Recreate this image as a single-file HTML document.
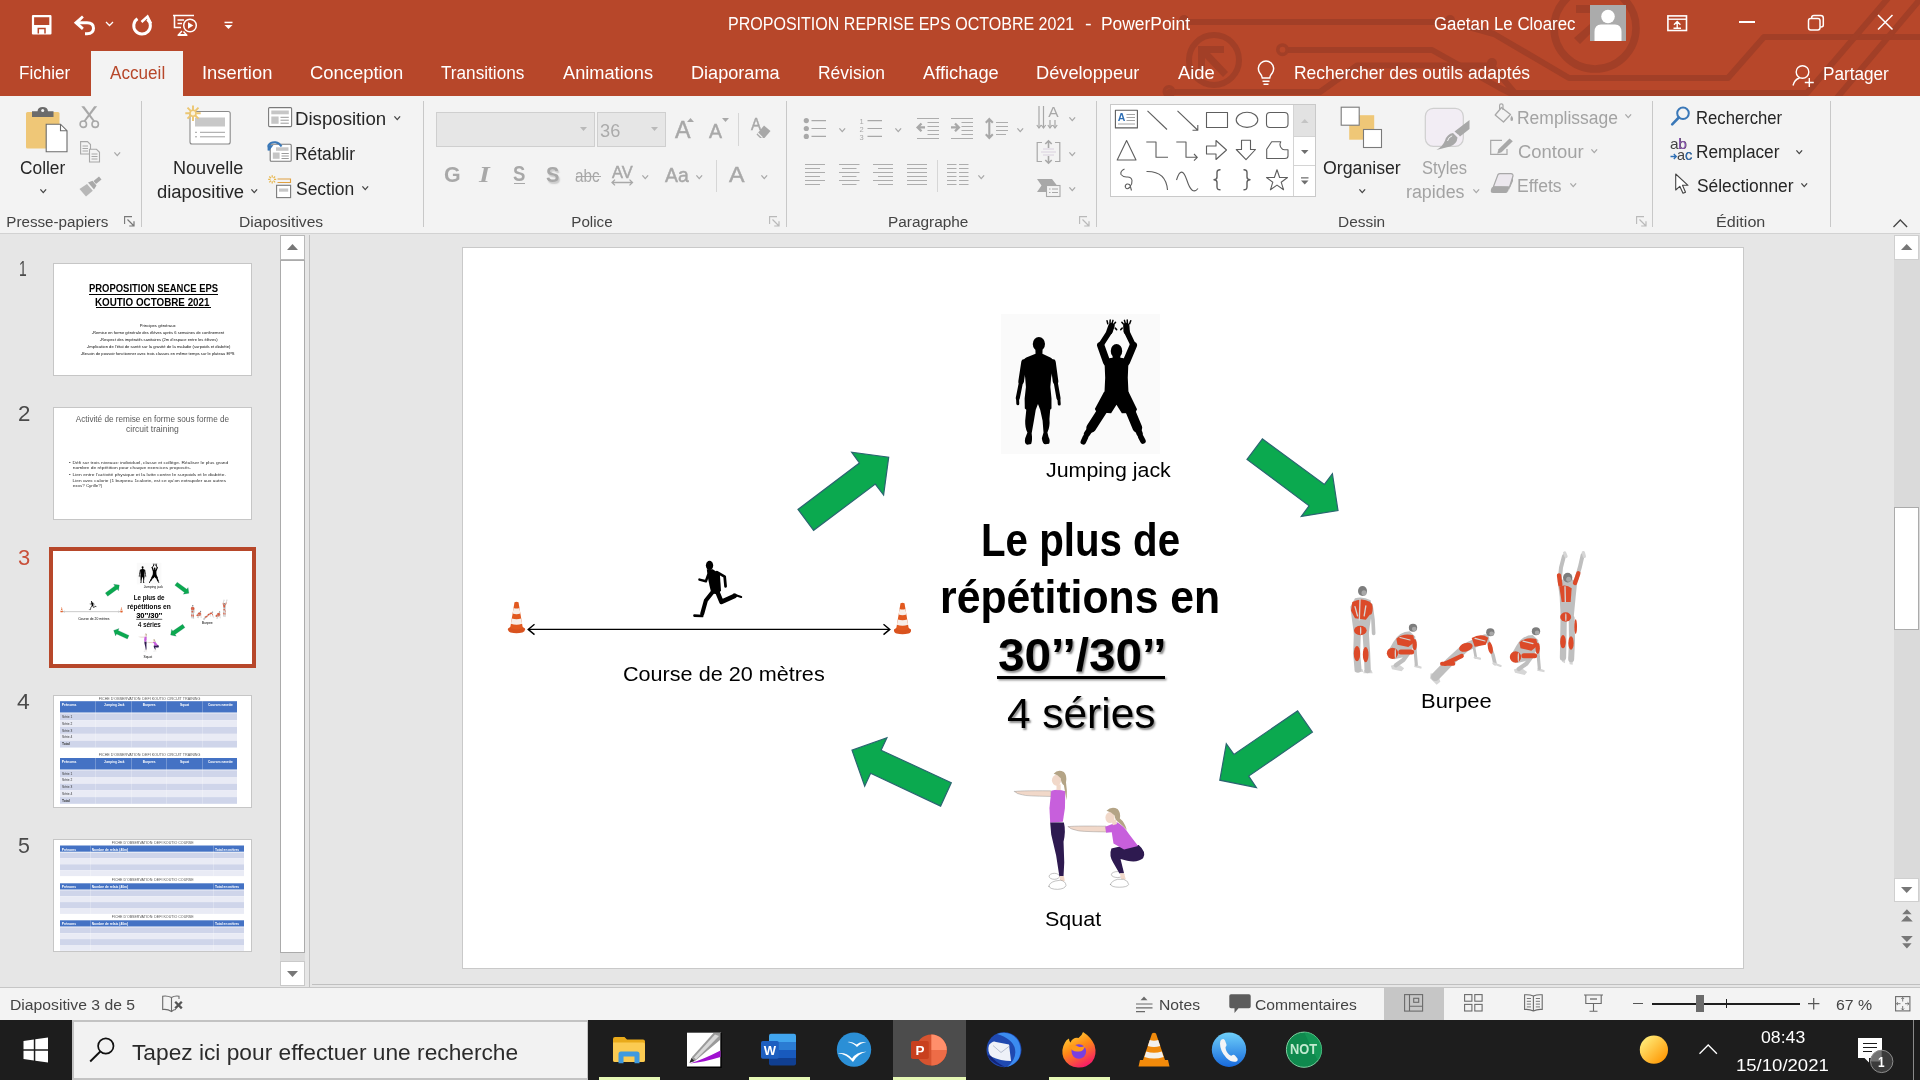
<!DOCTYPE html>
<html lang="fr"><head><meta charset="utf-8"><title>PowerPoint</title>
<style>
html,body{margin:0;padding:0;background:#e6e6e6;}
body{width:1920px;height:1080px;overflow:hidden;position:relative;font-family:"Liberation Sans", sans-serif;}
#r{position:absolute;left:0;top:0;width:1920px;height:1080px;overflow:hidden;will-change:transform;}
#r div,#r svg,#r span.t{position:absolute;}
#r div{box-sizing:border-box;}
span.t{white-space:pre;line-height:normal;transform-origin:0 0;display:block;}
svg{overflow:visible;}

</style></head><body><div id="r">
<div style="left:0px;top:0px;width:1920px;height:96px;background:#b7472a;"></div>
<div style="left:0px;top:96px;width:1920px;height:138px;background:#f3f3f3;"></div>
<div style="left:0px;top:233px;width:1920px;height:1px;background:#d2d2d2;"></div>
<div style="left:0px;top:234px;width:1920px;height:754px;background:#e6e6e6;"></div>
<div style="left:0px;top:987px;width:1920px;height:33px;background:#f3f3f3;border-top:1px solid #c6c6c6;"></div>
<div style="left:0px;top:1020px;width:1920px;height:60px;background:#1d1d1d;"></div>
<svg style="left:0px;top:0px;overflow:hidden;" width="1920" height="96" viewBox="0 0 1920 96">
<g fill="none" stroke="#a23f27" stroke-width="6" stroke-linejoin="round" stroke-linecap="round">
<path d="M1184 22 H1451 L1494 34 L1569 78 H1728 L1764 37 H1925"/>
<path d="M1289 50 H1432 L1500 88 L1510 93 H1807 L1889 -3"/>
<path d="M1836 99 L1922 -3"/>
<path d="M1169 92 H1320 L1357 65.5 H1488"/>
<path d="M1492 66 L1520 99"/>
</g>
<g fill="#a23f27">
<circle cx="1184" cy="20" r="5"/><circle cx="1450" cy="20" r="5"/>
<circle cx="1492" cy="63" r="5"/>
</g>
<g fill="none" stroke="#a23f27">
<circle cx="1282.5" cy="49.7" r="4.7" stroke-width="3.6"/>
<circle cx="1169" cy="91.5" r="4.7" stroke-width="3.6"/>
<circle cx="1214" cy="60" r="25" stroke-width="6"/>
<circle cx="1595" cy="28" r="41" stroke-width="7.5"/>
</g>
<g fill="#a23f27">
<path d="M1198 46 H1224 V53 H1210 L1228 72 L1223 77 L1205 58 V72 H1198 Z"/>
<path d="M1576 5 H1592 V13 H1576 Z M1574 38 L1590 24 L1595 29 L1580 44 Z"/>
</g>
</svg>
<div style="left:91px;top:51px;width:92px;height:46px;background:#f3f3f3;"></div>
<span class="t" style='left:728.16px;top:14.00px;font-size:18px;color:#ffffff;transform:scaleX(0.8907);'>PROPOSITION REPRISE EPS OCTOBRE 2021</span>
<span class="t" style='left:1074.31px;top:14.00px;font-size:18px;color:#ffffff;transform:scaleX(1.1111);'>  -  </span>
<span class="t" style='left:1101.05px;top:14.00px;font-size:18px;color:#ffffff;transform:scaleX(0.9669);'>PowerPoint</span>
<span class="t" style='left:1433.56px;top:14.00px;font-size:18px;color:#ffffff;transform:scaleX(0.9365);'>Gaetan Le Cloarec</span>
<span class="t" style='left:18.58px;top:63.00px;font-size:18px;color:#ffffff;transform:scaleX(0.9474);'>Fichier</span>
<span class="t" style='left:109.50px;top:63.00px;font-size:18px;color:#b7472a;transform:scaleX(0.9515);'>Accueil</span>
<span class="t" style='left:202.22px;top:63.00px;font-size:18px;color:#ffffff;transform:scaleX(1.0189);'>Insertion</span>
<span class="t" style='left:309.98px;top:63.00px;font-size:18px;color:#ffffff;transform:scaleX(1.0225);'>Conception</span>
<span class="t" style='left:440.76px;top:63.00px;font-size:18px;color:#ffffff;transform:scaleX(0.9538);'>Transitions</span>
<span class="t" style='left:563.00px;top:63.00px;font-size:18px;color:#ffffff;transform:scaleX(1.0113);'>Animations</span>
<span class="t" style='left:690.99px;top:63.00px;font-size:18px;color:#ffffff;transform:scaleX(1.0058);'>Diaporama</span>
<span class="t" style='left:818.05px;top:63.00px;font-size:18px;color:#ffffff;transform:scaleX(0.9699);'>Révision</span>
<span class="t" style='left:923.00px;top:63.00px;font-size:18px;color:#ffffff;transform:scaleX(1.0135);'>Affichage</span>
<span class="t" style='left:1035.98px;top:63.00px;font-size:18px;color:#ffffff;transform:scaleX(1.0125);'>Développeur</span>
<span class="t" style='left:1178.00px;top:63.00px;font-size:18px;color:#ffffff;transform:scaleX(1.0213);'>Aide</span>
<span class="t" style='left:1294.04px;top:63.00px;font-size:18px;color:#ffffff;transform:scaleX(0.9710);'>Rechercher des outils adaptés</span>
<span class="t" style='left:1822.57px;top:64.00px;font-size:18px;color:#ffffff;transform:scaleX(0.9517);'>Partager</span>
<svg style="left:1590px;top:5px;" width="36" height="36" viewBox="0 0 36 36"><rect width="36" height="36" fill="#ababab"/>
<circle cx="18" cy="11.5" r="6.8" fill="#fff"/>
<path d="M4.5 36 V27 Q4.5 19.5 11 19.5 H25 Q31.5 19.5 31.5 27 V36 Z" fill="#fff"/></svg>
<svg style="left:31px;top:14px;" width="22" height="22" viewBox="0 0 22 22"><path d="M2 2.200 H19.400 V19.500 H2 Z" fill="none" stroke="#fff" stroke-width="2.200" stroke-linejoin="round"/>
<rect x="2" y="11" width="17.400" height="8.500" fill="#fff"/>
<path d="M7.300 19.500 V14.500 H14 V19.500" fill="none" stroke="#b7472a" stroke-width="1.500"/></svg>
<svg style="left:73px;top:14px;" width="24" height="22" viewBox="0 0 24 22"><path d="M4 8.700 H14 Q20.500 8.700 20.500 14.200 Q20.500 19.500 14 19.700 H12" fill="none" stroke="#fff" stroke-width="3"/>
<path d="M0.800 8.700 L9 1.500 L10.800 3.600 L5.600 8.700 L10.800 13.800 L9 15.900 Z" fill="#fff"/></svg>
<svg style="left:105px;top:21px;" width="10" height="6" viewBox="0 0 10 6"><path d="M1 1 L4.5 4.5 L8 1" fill="none" stroke="#fff" stroke-width="1.3"/></svg>
<svg style="left:131px;top:14px;" width="22" height="22" viewBox="0 0 22 22"><path d="M6.500 4.800 A8.300 8.300 0 1 0 16.300 5.300" fill="none" stroke="#fff" stroke-width="3"/>
<path d="M10.500 8 L16.500 2.500 L20 9.500" fill="none" stroke="#fff" stroke-width="2.600"/></svg>
<svg style="left:172px;top:14px;" width="27" height="23" viewBox="0 0 27 23"><path d="M1 1.5 H22 M2.5 2 V13.5 H9" fill="none" stroke="#fff" stroke-width="1.6"/>
<path d="M5.5 6 H12 M5.5 9.5 H10" fill="none" stroke="#fff" stroke-width="1.4"/>
<circle cx="18" cy="11.5" r="6.3" fill="none" stroke="#fff" stroke-width="1.5"/>
<path d="M16 8.2 L21.3 11.5 L16 14.8 Z" fill="#fff"/>
<path d="M10 17 L6.5 20.8 H14.5 L11.5 17.5 M6 21.3 H15" fill="none" stroke="#fff" stroke-width="1.4"/></svg>
<svg style="left:224px;top:21px;" width="10" height="9" viewBox="0 0 10 9"><rect x="0.5" y="0.7" width="8" height="1.5" fill="#fff"/><path d="M0.5 4 H8.5 L4.5 8 Z" fill="#fff"/></svg>
<svg style="left:1667px;top:15px;" width="21" height="17" viewBox="0 0 21 17"><rect x="0.9" y="0.9" width="18.6" height="14.6" fill="none" stroke="#fff" stroke-width="1.6"/>
<path d="M1 4.2 H19.5" stroke="#fff" stroke-width="1.4"/>
<path d="M10.2 13.5 V7 M7 9.8 L10.2 6.6 L13.4 9.8 M6.5 13.2 H14" fill="none" stroke="#fff" stroke-width="1.4"/></svg>
<div style="left:1739px;top:21px;width:16px;height:1.6px;background:#ffffff;"></div>
<svg style="left:1807px;top:14px;" width="18" height="18" viewBox="0 0 18 18"><rect x="1.5" y="4.5" width="11.5" height="11.5" rx="2.2" fill="none" stroke="#fff" stroke-width="1.5"/>
<path d="M4.7 4.2 V3.6 Q4.7 1.5 7 1.5 H13.7 Q16.3 1.5 16.3 4 V11 Q16.3 13 14 13 H13.3" fill="none" stroke="#fff" stroke-width="1.5"/></svg>
<svg style="left:1877px;top:14px;" width="17" height="17" viewBox="0 0 17 17"><path d="M1 1 L15.5 15.5 M15.5 1 L1 15.5" stroke="#fff" stroke-width="1.5" fill="none"/></svg>
<svg style="left:1256px;top:61px;" width="20" height="26" viewBox="0 0 20 26"><path d="M6.3 17 Q6 14.5 3.8 12 A7.6 7.6 0 1 1 16.2 12 Q14 14.5 13.7 17 Z" fill="none" stroke="#fff" stroke-width="1.5"/>
<path d="M6.5 20.2 H13.5 M7.5 23.3 H12.5" stroke="#fff" stroke-width="1.5"/></svg>
<svg style="left:1792px;top:64px;" width="24" height="24" viewBox="0 0 24 24"><circle cx="10.5" cy="8" r="6.3" fill="none" stroke="#fff" stroke-width="1.4"/>
<path d="M1 21.5 Q2.5 15.5 7.5 14" fill="none" stroke="#fff" stroke-width="1.4"/>
<path d="M17.3 14 V23 M12.8 18.5 H21.8" stroke="#fff" stroke-width="1.4"/></svg>
<div style="left:141px;top:101px;width:1px;height:126px;background:#c8c8c8;"></div>
<div style="left:423px;top:101px;width:1px;height:126px;background:#c8c8c8;"></div>
<div style="left:786px;top:101px;width:1px;height:126px;background:#c8c8c8;"></div>
<div style="left:1096px;top:101px;width:1px;height:126px;background:#c8c8c8;"></div>
<div style="left:1652px;top:101px;width:1px;height:126px;background:#c8c8c8;"></div>
<div style="left:1830px;top:101px;width:1px;height:126px;background:#c8c8c8;"></div>
<svg style="left:26px;top:106px;" width="42" height="47" viewBox="0 0 42 47">
<rect x="0" y="6" width="33.5" height="36.5" rx="1.5" fill="#efc777"/>
<path d="M6 5.2 H11.5 Q12 1 16.7 1 Q21.5 1 22 5.2 H27.5 V11 H6 Z" fill="#6b6b6b"/>
<circle cx="16.7" cy="4.6" r="1.5" fill="#f3f3f3"/>
<path d="M20.2 18.2 H34.5 L41 24.7 V45.8 H20.2 Z" fill="#fff" stroke="#6b6b6b" stroke-width="1.1"/>
<path d="M34.5 18.2 V24.7 H41" fill="none" stroke="#6b6b6b" stroke-width="1.1"/></svg>
<span class="t" style='left:19.54px;top:158.00px;font-size:18px;color:#262626;transform:scaleX(0.9617);'>Coller</span>
<svg style="left:40px;top:189px;" width="6.5" height="4.6" viewBox="0 0 6.5 4.6"><path d="M0.4 0.4 L3.25 3.6 L6.1 0.4" fill="none" stroke="#444" stroke-width="1.3"/></svg>
<svg style="left:79px;top:106px;" width="21" height="23" viewBox="0 0 21 23"><g fill="#a8a8a8"><path d="M2.300 0.300 L5.300 0.300 L16 15 L14.500 16 Z"/><path d="M18.200 0.300 L15.200 0.300 L4.500 15 L6 16 Z"/></g>
<g fill="none" stroke="#a8a8a8" stroke-width="1.600"><circle cx="4.300" cy="18.200" r="3.200"/><circle cx="16.200" cy="18.200" r="3.200"/></g></svg>
<svg style="left:80px;top:141px;" width="21" height="22" viewBox="0 0 21 22"><g fill="#f3f3f3" stroke="#a8a8a8" stroke-width="1.1">
<path d="M0.6 0.6 H7.5 L10.5 3.6 V13 H0.6 Z"/><path d="M9.5 8.3 H16.5 L19.5 11.3 V21 H9.5 Z"/></g>
<g stroke="#a8a8a8" stroke-width="1"><path d="M2.5 5 H8 M2.5 7.5 H8 M2.5 10 H8 M11.5 13 H17.5 M11.5 15.5 H17.5 M11.5 18 H17.5"/></g></svg>
<svg style="left:114px;top:152px;" width="6.5" height="4.6" viewBox="0 0 6.5 4.6"><path d="M0.4 0.4 L3.25 3.6 L6.1 0.4" fill="none" stroke="#a8a8a8" stroke-width="1.3"/></svg>
<svg style="left:79px;top:176px;" width="23" height="21" viewBox="0 0 23 21"><g fill="#a8a8a8"><path d="M14.5 5 L20 0.5 L22.5 3.5 L17 8 Z"/>
<path d="M9 6.5 L13.5 4.8 L17.5 9.5 L15 13.5 Z"/><path d="M8 8 L13.8 14.8 L7 20.5 L0.5 13 Z" opacity="0.8"/></g></svg>
<span class="t" style='left:6.25px;top:213.00px;font-size:15.2px;color:#444444;'>Presse-papiers</span>
<svg style="left:124px;top:216px;" width="12" height="11" viewBox="0 0 12 11"><path d="M0.6 8 V0.6 H8" fill="none" stroke="#777" stroke-width="1.1"/><path d="M3.5 3.5 L10 10 M10 5.2 V10 H5.2" fill="none" stroke="#777" stroke-width="1.2"/></svg>
<svg style="left:185px;top:105px;" width="46" height="41" viewBox="0 0 46 41">
<rect x="5" y="6.5" width="40.2" height="32.5" rx="2" fill="#fff" stroke="#8a8a8a" stroke-width="1.1"/>
<rect x="10" y="12.5" width="30" height="9" fill="#c8c8c8"/>
<path d="M10 27.3 H12 M15 27.3 H40 M10 31.8 H12 M15 31.8 H40" stroke="#a0a0a0" stroke-width="1"/>
<g stroke="#ecc671" stroke-width="1.9" fill="none"><path d="M8 0.5 V5 M8 11.5 V16 M0.3 8.2 H4.8 M11.2 8.2 H15.7 M2.5 2.7 L5.7 5.9 M10.3 10.5 L13.5 13.7 M13.5 2.7 L10.3 5.9 M5.7 10.5 L2.5 13.7"/></g>
<circle cx="8" cy="8.2" r="3" fill="#fbf3dc" stroke="#ecc671" stroke-width="1.6"/></svg>
<span class="t" style='left:173.49px;top:158.00px;font-size:18px;color:#262626;transform:scaleX(1.0037);'>Nouvelle</span>
<span class="t" style='left:156.73px;top:182.00px;font-size:18px;color:#262626;transform:scaleX(1.0240);'>diapositive</span>
<svg style="left:251px;top:189px;" width="6.5" height="4.6" viewBox="0 0 6.5 4.6"><path d="M0.4 0.4 L3.25 3.6 L6.1 0.4" fill="none" stroke="#444" stroke-width="1.3"/></svg>
<svg style="left:268px;top:107px;" width="25" height="21" viewBox="0 0 25 21"><rect x="0.6" y="0.6" width="23" height="19" rx="1" fill="#fff" stroke="#7a7a7a" stroke-width="1.1"/>
<rect x="3.3" y="3.5" width="17.5" height="3.8" fill="#c6c6c6"/><rect x="3.3" y="9.5" width="7.3" height="7.3" fill="#c6c6c6"/>
<path d="M12.5 10.3 H20.8 M12.5 13.2 H20.8 M12.5 16.2 H20.8" stroke="#9a9a9a" stroke-width="1"/></svg>
<span class="t" style='left:295.20px;top:109.00px;font-size:18px;color:#262626;transform:scaleX(1.0351);'>Disposition</span>
<svg style="left:394px;top:115.8px;" width="6.5" height="4.6" viewBox="0 0 6.5 4.6"><path d="M0.4 0.4 L3.25 3.6 L6.1 0.4" fill="none" stroke="#444" stroke-width="1.3"/></svg>
<svg style="left:267px;top:141px;" width="26" height="22" viewBox="0 0 26 22"><rect x="3.2" y="3.3" width="21" height="17" rx="1" fill="#fff" stroke="#7a7a7a" stroke-width="1.1"/>
<rect x="9" y="6.3" width="12.5" height="3.5" fill="#c6c6c6"/><rect x="5.8" y="11.5" width="6.8" height="6.3" fill="#c6c6c6"/>
<path d="M14.5 12.5 H21.8 M14.5 15 H21.8 M14.5 17.5 H21.8" stroke="#9a9a9a" stroke-width="1"/>
<path d="M1.6 9.5 V4 Q4 0.8 8.5 1.3 Q12.5 2 14.5 5.5" fill="none" stroke="#3a78b8" stroke-width="2"/>
<path d="M0.3 4.5 L6.5 4 L2 10 Z" fill="#3a78b8"/></svg>
<span class="t" style='left:295.30px;top:144.00px;font-size:18px;color:#262626;transform:scaleX(0.9668);'>Rétablir</span>
<svg style="left:268px;top:175px;" width="24" height="24" viewBox="0 0 24 24">
<g stroke="#e8b64a" stroke-width="1.2" fill="none"><path d="M4.2 0.3 V2.6 M4.2 6.2 V8.5 M0.2 4.4 H2.4 M6 4.4 H8.2 M1.3 1.5 L2.9 3.1 M5.5 5.7 L7.1 7.3 M7.1 1.5 L5.5 3.1 M2.9 5.7 L1.3 7.3"/></g>
<path d="M9.5 4 H22.5 V7.5 H9.5" fill="none" stroke="#e0a040" stroke-width="1.1"/>
<rect x="8.6" y="10.3" width="14" height="12.3" fill="#fff" stroke="#7a7a7a" stroke-width="1.1"/>
<rect x="11" y="13.5" width="9.2" height="3.2" fill="#c6c6c6"/></svg>
<span class="t" style='left:296.02px;top:179.00px;font-size:18px;color:#262626;transform:scaleX(0.9700);'>Section</span>
<svg style="left:362px;top:186px;" width="6.5" height="4.6" viewBox="0 0 6.5 4.6"><path d="M0.4 0.4 L3.25 3.6 L6.1 0.4" fill="none" stroke="#444" stroke-width="1.3"/></svg>
<span class="t" style='left:239.21px;top:213.00px;font-size:15.2px;color:#444444;transform:scaleX(1.0280);'>Diapositives</span>
<div style="left:436px;top:112px;width:159px;height:35px;background:#e6e6e6;border:1px solid #cfcfcf;"></div>
<div style="left:597px;top:112px;width:69px;height:35px;background:#e6e6e6;border:1px solid #cfcfcf;"></div>
<svg style="left:580px;top:127px;" width="8" height="5" viewBox="0 0 8 5"><path d="M0 0 H7 L3.5 4 Z" fill="#b9b9b9"/></svg>
<svg style="left:651px;top:127px;" width="8" height="5" viewBox="0 0 8 5"><path d="M0 0 H7 L3.5 4 Z" fill="#b9b9b9"/></svg>
<span class="t" style='left:599.99px;top:121.00px;font-size:18px;color:#ababab;transform:scaleX(1.0135);'>36</span>
<span class="t" style='left:674.50px;top:116.00px;font-size:24px;color:#a8a8a8;transform:scaleX(0.9688);-webkit-text-stroke:0.45px #a8a8a8;'>A</span>
<svg style="left:687px;top:118px;" width="8" height="5" viewBox="0 0 8 5"><path d="M0 4 H7 L3.5 0 Z" fill="#a8a8a8"/></svg>
<span class="t" style='left:709.00px;top:120.00px;font-size:19.5px;color:#a8a8a8;-webkit-text-stroke:0.45px #a8a8a8;'>A</span>
<svg style="left:721.5px;top:118px;" width="8" height="5" viewBox="0 0 8 5"><path d="M0 0 H7 L3.5 4 Z" fill="#a8a8a8"/></svg>
<div style="left:738px;top:113px;width:1px;height:33px;background:#d6d6d6;"></div>
<span class="t" style='left:751.00px;top:115.00px;font-size:17px;color:#a8a8a8;transform:scaleX(0.8889);-webkit-text-stroke:0.45px #a8a8a8;'>A</span>
<svg style="left:754px;top:124px;" width="18" height="16" viewBox="0 0 18 16"><path d="M10 1.5 L16.5 7 L10.5 14 H6 L2.5 10.5 Z" fill="#a8a8a8"/><path d="M3.8 9 L8.5 13.7" stroke="#f3f3f3" stroke-width="1.2"/></svg>
<span class="t" style='left:443.55px;top:162.00px;font-size:22.5px;color:#a8a8a8;font-weight:700;transform:scaleX(0.9508);'>G</span>
<span class="t" style='left:479.31px;top:162.00px;font-size:22.5px;color:#a8a8a8;font-weight:700;font-style:italic;font-family:"Liberation Serif", serif;transform:scaleX(1.2308);'>I</span>
<span class="t" style='left:513.35px;top:162.00px;font-size:21.5px;color:#a8a8a8;font-weight:700;transform:scaleX(0.8627);'>S</span>
<div style="left:514px;top:182.5px;width:11px;height:1.3px;background:#a8a8a8;"></div>
<span class="t" style='left:546.33px;top:162.00px;font-size:22.5px;color:#a8a8a8;font-weight:700;transform:scaleX(0.8889);text-shadow:1.5px 1.5px 1.5px #c9c9c9;'>S</span>
<span class="t" style='left:575.38px;top:165.00px;font-size:18.5px;color:#a8a8a8;transform:scaleX(0.8246);'>abc</span>
<div style="left:575.5px;top:176.3px;width:25px;height:1.2px;background:#a8a8a8;"></div>
<span class="t" style='left:611.50px;top:164.00px;font-size:16px;color:#a8a8a8;transform:scaleX(1.0250);-webkit-text-stroke:0.45px #a8a8a8;'>AV</span>
<svg style="left:611px;top:179px;" width="23" height="7" viewBox="0 0 23 7"><path d="M1 3.5 H21.5 M4 0.6 L1 3.5 L4 6.4 M18.5 0.6 L21.5 3.5 L18.5 6.4" fill="none" stroke="#a8a8a8" stroke-width="1.3"/></svg>
<svg style="left:642px;top:174.5px;" width="6.5" height="4.6" viewBox="0 0 6.5 4.6"><path d="M0.4 0.4 L3.25 3.6 L6.1 0.4" fill="none" stroke="#a8a8a8" stroke-width="1.3"/></svg>
<span class="t" style='left:665.00px;top:164.00px;font-size:20px;color:#a8a8a8;transform:scaleX(0.9694);-webkit-text-stroke:0.45px #a8a8a8;'>Aa</span>
<svg style="left:695.5px;top:174.5px;" width="6.5" height="4.6" viewBox="0 0 6.5 4.6"><path d="M0.4 0.4 L3.25 3.6 L6.1 0.4" fill="none" stroke="#a8a8a8" stroke-width="1.3"/></svg>
<div style="left:716px;top:160px;width:1px;height:32px;background:#d6d6d6;"></div>
<span class="t" style='left:728.75px;top:162.00px;font-size:22.5px;color:#a8a8a8;transform:scaleX(1.0333);-webkit-text-stroke:0.45px #a8a8a8;'>A</span>
<svg style="left:761px;top:174.5px;" width="6.5" height="4.6" viewBox="0 0 6.5 4.6"><path d="M0.4 0.4 L3.25 3.6 L6.1 0.4" fill="none" stroke="#a8a8a8" stroke-width="1.3"/></svg>
<span class="t" style='left:571.25px;top:213.00px;font-size:15.2px;color:#444444;'>Police</span>
<svg style="left:769px;top:216px;" width="12" height="11" viewBox="0 0 12 11"><path d="M0.6 8 V0.6 H8" fill="none" stroke="#b9b9b9" stroke-width="1.1"/><path d="M3.5 3.5 L10 10 M10 5.2 V10 H5.2" fill="none" stroke="#b9b9b9" stroke-width="1.2"/></svg>
<svg style="left:803px;top:117px;" width="24" height="23" viewBox="0 0 24 23"><g fill="#a8a8a8"><circle cx="3.3" cy="3.6" r="2.6"/><circle cx="3.3" cy="11.5" r="2.6"/><circle cx="3.3" cy="19.4" r="2.6"/></g>
<path d="M8.5 3.6 H23 M8.5 11.5 H23 M8.5 19.4 H23" stroke="#a8a8a8" stroke-width="1.2"/></svg>
<svg style="left:839px;top:128px;" width="6.5" height="4.6" viewBox="0 0 6.5 4.6"><path d="M0.4 0.4 L3.25 3.6 L6.1 0.4" fill="none" stroke="#a8a8a8" stroke-width="1.3"/></svg>
<svg style="left:859px;top:117px;" width="24" height="23" viewBox="0 0 24 23"><path d="M8.5 3.6 H23 M8.5 11.5 H23 M8.5 19.4 H23" stroke="#a8a8a8" stroke-width="1.2"/>
<text x="0.5" y="6.5" font-size="7.5" fill="#a8a8a8" font-family="Liberation Sans, sans-serif">1</text>
<text x="0.5" y="14.5" font-size="7.5" fill="#a8a8a8" font-family="Liberation Sans, sans-serif">2</text>
<text x="0.5" y="22.5" font-size="7.5" fill="#a8a8a8" font-family="Liberation Sans, sans-serif">3</text></svg>
<svg style="left:894.5px;top:128px;" width="6.5" height="4.6" viewBox="0 0 6.5 4.6"><path d="M0.4 0.4 L3.25 3.6 L6.1 0.4" fill="none" stroke="#a8a8a8" stroke-width="1.3"/></svg>
<svg style="left:916px;top:117px;" width="24" height="23" viewBox="0 0 24 23"><path d="M1 1.5 H23 M11.5 5.500 H23 M11.5 9.500 H23 M11.5 13.500 H23 M11.500 17.500 H23 M1 21.500 H23" stroke="#adadad" stroke-width="1"/>
<path d="M9 10.4 H2.5 M5.5 6.5 L1.6 10.4 L5.5 14.300" fill="none" stroke="#a8a8a8" stroke-width="2.300"/></svg>
<svg style="left:950px;top:117px;" width="24" height="23" viewBox="0 0 24 23"><path d="M1 1.5 H23 M11.5 5.500 H23 M11.5 9.500 H23 M11.5 13.500 H23 M11.500 17.500 H23 M1 21.500 H23" stroke="#adadad" stroke-width="1"/>
<path d="M1 10.4 H8 M5 6.5 L8.9 10.4 L5 14.300" fill="none" stroke="#a8a8a8" stroke-width="2.300"/></svg>
<svg style="left:985px;top:117px;" width="24" height="23" viewBox="0 0 24 23"><path d="M11 5.500 H23 M11 9.500 H23 M11 13.500 H23 M11 17.500 H21" stroke="#adadad" stroke-width="1"/>
<path d="M4.3 2 V21 M0.800 5.700 L4.3 2 L7.800 5.700 M0.800 17.300 L4.3 21 L7.800 17.300" fill="none" stroke="#a8a8a8" stroke-width="2.100"/></svg>
<svg style="left:1017px;top:128px;" width="6.5" height="4.6" viewBox="0 0 6.5 4.6"><path d="M0.4 0.4 L3.25 3.6 L6.1 0.4" fill="none" stroke="#a8a8a8" stroke-width="1.3"/></svg>
<svg style="left:1036px;top:105px;" width="26" height="25" viewBox="0 0 26 25"><path d="M3 1 V23 M7.5 1 V23 M14 15 V23 M19 15 V23" stroke="#a8a8a8" stroke-width="1.2" fill="none"/>
<path d="M0.8 20 L3 23 L5.2 20 M5.3 20 L7.5 23 L9.7 20 M11.8 20 L14 23 L16.2 20 M16.8 20 L19 23 L21.2 20" stroke="#a8a8a8" stroke-width="1.2" fill="none"/>
<text x="12.3" y="12.2" font-size="15.5" fill="#a8a8a8" font-family="Liberation Sans, sans-serif">A</text></svg>
<svg style="left:1069px;top:116.5px;" width="6.5" height="4.6" viewBox="0 0 6.5 4.6"><path d="M0.4 0.4 L3.25 3.6 L6.1 0.4" fill="none" stroke="#a8a8a8" stroke-width="1.3"/></svg>
<svg style="left:1036px;top:140px;" width="26" height="25" viewBox="0 0 26 25"><path d="M6 2.5 H1.2 V21.5 H6 M19 2.5 H23.8 V21.5 H19" fill="none" stroke="#a8a8a8" stroke-width="1.2"/>
<path d="M7 9 H18 M5 12 H20 M7 15 H18" stroke="#d9d0de" stroke-width="1"/>
<path d="M12.5 8 V1 M9.3 4 L12.5 0.8 L15.7 4 M12.5 16 V23 M9.3 20 L12.5 23.2 L15.7 20" fill="none" stroke="#a8a8a8" stroke-width="1.6"/></svg>
<svg style="left:1069px;top:152px;" width="6.5" height="4.6" viewBox="0 0 6.5 4.6"><path d="M0.4 0.4 L3.25 3.6 L6.1 0.4" fill="none" stroke="#a8a8a8" stroke-width="1.3"/></svg>
<svg style="left:1036px;top:178px;" width="26" height="20" viewBox="0 0 26 20"><path d="M1 1 H16 L21 7.5 L16 14 H1 L5.5 7.5 Z" fill="#a8a8a8"/>
<rect x="10.5" y="7.5" width="13.5" height="11" fill="#f3f3f3" stroke="#a8a8a8" stroke-width="1.1"/>
<path d="M13 11 H14.5 M16 11 H22 M13 14.5 H14.5 M16 14.5 H22" stroke="#a8a8a8" stroke-width="1"/></svg>
<svg style="left:1069px;top:186.5px;" width="6.5" height="4.6" viewBox="0 0 6.5 4.6"><path d="M0.4 0.4 L3.25 3.6 L6.1 0.4" fill="none" stroke="#a8a8a8" stroke-width="1.3"/></svg>
<svg style="left:805px;top:164px;" width="21" height="22" viewBox="0 0 21 22"><path d="M0 0.5 H20 M0 4.5 H15 M0 8.5 H20 M0 12.5 H15 M0 16.5 H20 M0 20.5 H15" stroke="#adadad" stroke-width="1.0" fill="none"/></svg>
<svg style="left:839px;top:164px;" width="21" height="22" viewBox="0 0 21 22"><path d="M0 0.5 H20.5 M3 4.5 H17.5 M0 8.5 H20.5 M3 12.5 H17.5 M0 16.5 H20.5 M3 20.5 H17.5" stroke="#adadad" stroke-width="1.0" fill="none"/></svg>
<svg style="left:873px;top:164px;" width="21" height="22" viewBox="0 0 21 22"><path d="M0 0.5 H20 M5 4.5 H20 M0 8.5 H20 M5 12.5 H20 M0 16.5 H20 M5 20.5 H20" stroke="#adadad" stroke-width="1.0" fill="none"/></svg>
<svg style="left:907px;top:164px;" width="21" height="22" viewBox="0 0 21 22"><path d="M0 0.5 H20 M0 4.5 H20 M0 8.5 H20 M0 12.5 H20 M0 16.5 H20 M0 20.5 H20" stroke="#adadad" stroke-width="1.0" fill="none"/></svg>
<div style="left:937px;top:160px;width:1px;height:32px;background:#d6d6d6;"></div>
<svg style="left:946.5px;top:164px;" width="22" height="22" viewBox="0 0 22 22"><path d="M0 0.5 H9.5 M0 4.5 H9.5 M0 8.5 H9.5 M0 12.5 H9.5 M0 16.5 H9.5 M0 20.5 H9.5 M12 0.5 H21.5 M12 4.5 H21.5 M12 8.5 H21.5 M12 12.5 H21.5 M12 16.5 H21.5 M12 20.5 H21.5" stroke="#adadad" stroke-width="1.0" fill="none"/></svg>
<svg style="left:977.5px;top:174.5px;" width="6.5" height="4.6" viewBox="0 0 6.5 4.6"><path d="M0.4 0.4 L3.25 3.6 L6.1 0.4" fill="none" stroke="#a8a8a8" stroke-width="1.3"/></svg>
<span class="t" style='left:888.23px;top:213.00px;font-size:15.2px;color:#444444;transform:scaleX(1.0129);'>Paragraphe</span>
<svg style="left:1079px;top:216px;" width="12" height="11" viewBox="0 0 12 11"><path d="M0.6 8 V0.6 H8" fill="none" stroke="#b9b9b9" stroke-width="1.1"/><path d="M3.5 3.5 L10 10 M10 5.2 V10 H5.2" fill="none" stroke="#b9b9b9" stroke-width="1.2"/></svg>
<div style="left:1110px;top:104px;width:206px;height:93px;background:#ffffff;border:1px solid #c9c9c9;"></div>
<div style="left:1294px;top:105px;width:21px;height:32px;background:#e2e2e2;"></div>
<div style="left:1293px;top:105px;width:1px;height:91px;background:#d4d4d4;"></div>
<div style="left:1294px;top:136px;width:21px;height:1px;background:#d4d4d4;"></div>
<div style="left:1294px;top:165px;width:21px;height:1px;background:#d4d4d4;"></div>
<svg style="left:1301px;top:119px;" width="8" height="5" viewBox="0 0 8 5"><path d="M0 4 H7.5 L3.75 0 Z" fill="#c4c4c4"/></svg>
<svg style="left:1301px;top:149.5px;" width="8" height="5" viewBox="0 0 8 5"><path d="M0 0 H7.5 L3.75 4 Z" fill="#6e6e6e"/></svg>
<svg style="left:1301px;top:177px;" width="8" height="9" viewBox="0 0 8 9"><path d="M0 0.2 H7.5 V1.6 H0 Z M0 3.6 H7.5 L3.75 7.6 Z" fill="#6e6e6e"/></svg>
<svg style="left:1110px;top:104px;" width="184" height="93" viewBox="0 0 184 93">
<g fill="none" stroke="#5e5e5e" stroke-width="1.1" stroke-linejoin="round">
<rect x="5.4" y="6.3" width="22" height="17.6" fill="#fff"/>
<path d="M16.5 10.5 H25 M16.5 13.5 H25 M16.5 16.5 H25 M8 20 H25" stroke="#9a9a9a" stroke-width="0.9"/>
<path d="M37.5 6.8 L57 25.5"/>
<path d="M67.5 6.8 L87.5 26 M87.8 21 V26.3 H82.5"/>
<rect x="96.5" y="8.5" width="21" height="15"/>
<ellipse cx="137" cy="15.8" rx="10.8" ry="7.6"/>
<rect x="156.5" y="8.5" width="21.5" height="15" rx="3.5"/>
<path d="M16.6 36.5 L26 56 H7.2 Z"/>
<path d="M36.3 38 H46 V53.3 H58"/>
<path d="M66.3 38 H76 V53.3 H87 M84 50 L87.3 53.3 L84 56.6"/>
<path d="M96.5 42 H106 V36.5 L116.5 46 L106 55.5 V50 H96.5 Z"/>
<path d="M131.5 36.3 H140.5 V45.5 H145.5 L136 55.7 L126.3 45.5 H131.5 Z"/>
<path d="M156.700 54.500 V45.300 L161.700 37.800 H170.800 Q168.500 42 172.500 45.200 Q175 46 178 45.700 V52 Q178 54.500 175 54.500 Z"/>
<path d="M14.5 65 Q10 67 11 70.5 Q13.5 73.5 17.5 73 Q21.5 73 22 76.500 Q22.5 80 19.5 83.500 Q17 86 15.500 83.5 Q14.5 81 17 80 Q20 79.500 20.5 83 L21.5 86.500"/>
<path d="M36.5 67.5 Q56 67 57.5 86"/>
<path d="M66.5 76 Q71.500 60 77 76.500 Q82 92 88 84.500"/>
<path d="M110.500 65.800 Q107 65.500 107 68.500 V73 Q107 75.500 104 75.800 Q107 76 107 78.500 V83 Q107 86 110.500 85.800" stroke-width="1.4"/>
<path d="M133.500 65.800 Q137 65.500 137 68.500 V73 Q137 75.500 140 75.800 Q137 76 137 78.500 V83 Q137 86 133.500 85.800" stroke-width="1.4"/>
<path d="M167 65.800 L169.600 73.500 H177.500 L171.200 78.200 L173.600 85.800 L167 81.100 L160.400 85.800 L162.800 78.200 L156.500 73.500 H164.400 Z"/>
</g>
<text x="7.700" y="17.300" font-size="10.500" font-weight="700" fill="#2f6fb5" font-family="Liberation Sans, sans-serif">A</text>
</svg>
<svg style="left:1340px;top:106px;" width="43" height="43" viewBox="0 0 43 43"><rect x="9.200" y="9.200" width="25" height="24.500" fill="#efc777"/>
<rect x="1.200" y="1.200" width="18" height="18" fill="#fff" stroke="#7a7a7a" stroke-width="1.100"/>
<rect x="23.500" y="23.500" width="18" height="18" fill="#fff" stroke="#7a7a7a" stroke-width="1.100"/></svg>
<span class="t" style='left:1322.51px;top:158.00px;font-size:18px;color:#262626;transform:scaleX(0.9840);'>Organiser</span>
<svg style="left:1358.75px;top:189px;" width="6.5" height="4.6" viewBox="0 0 6.5 4.6"><path d="M0.4 0.4 L3.25 3.6 L6.1 0.4" fill="none" stroke="#444" stroke-width="1.3"/></svg>
<svg style="left:1424px;top:107px;" width="47" height="46" viewBox="0 0 47 46"><rect x="1.300" y="1.300" width="38" height="38" rx="8" fill="#f2edf4" stroke="#cfcfcf" stroke-width="1.200"/>
<path d="M45.500 13 L34 27.500 L30.500 24.500 L45.500 13 Z M45.500 13 V22 L36 29.500 L33 26" fill="#a8a8a8"/>
<path d="M29 26 L33.500 30.500 Q33 37 26 39.500 Q19 41 12.500 43 Q19 39 21 33.500 Q23 27 29 26 Z" fill="#a8a8a8"/>
<path d="M28.200 28.800 Q24.500 30 23.500 34" stroke="#f3f3f3" stroke-width="1" fill="none"/></svg>
<span class="t" style='left:1421.81px;top:158.00px;font-size:18px;color:#a3a3a3;transform:scaleX(0.9162);'>Styles</span>
<span class="t" style='left:1406.26px;top:182.00px;font-size:18px;color:#a3a3a3;transform:scaleX(0.9913);'>rapides</span>
<svg style="left:1472.5px;top:189px;" width="6.5" height="4.6" viewBox="0 0 6.5 4.6"><path d="M0.4 0.4 L3.25 3.6 L6.1 0.4" fill="none" stroke="#a8a8a8" stroke-width="1.3"/></svg>
<svg style="left:1494px;top:103px;" width="20" height="21" viewBox="0 0 20 21"><path d="M7.500 4.500 L16.500 11.500 L9.500 19 L1.200 12 Z" fill="#f3f3f3" stroke="#a8a8a8" stroke-width="1.300" stroke-linejoin="round"/>
<path d="M9 7 V2.500 Q9 0.800 7.300 0.800 Q5.600 0.800 5.600 2.500 V6" fill="none" stroke="#a8a8a8" stroke-width="1.200"/>
<path d="M17.700 12.500 Q19.800 15.500 19 17.300 Q17.700 18.500 16.500 17.300 Q15.700 15.500 17.700 12.500 Z" fill="#a8a8a8"/></svg>
<span class="t" style='left:1517.29px;top:108.00px;font-size:18px;color:#a3a3a3;transform:scaleX(0.9705);'>Remplissage</span>
<svg style="left:1625px;top:114.3px;" width="6.5" height="4.6" viewBox="0 0 6.5 4.6"><path d="M0.4 0.4 L3.25 3.6 L6.1 0.4" fill="none" stroke="#a8a8a8" stroke-width="1.3"/></svg>
<svg style="left:1490px;top:138px;" width="24" height="18" viewBox="0 0 24 18"><path d="M12 2.300 H0.700 V16.300 H17 V11" fill="none" stroke="#a8a8a8" stroke-width="1.200"/>
<path d="M19.500 0.500 L22.800 3.200 L11.500 14.300 L7.200 15.800 L8.500 11.300 Z" fill="#a8a8a8"/></svg>
<span class="t" style='left:1517.73px;top:142.00px;font-size:18px;color:#a3a3a3;transform:scaleX(1.0239);'>Contour</span>
<svg style="left:1590.75px;top:148.5px;" width="6.5" height="4.6" viewBox="0 0 6.5 4.6"><path d="M0.4 0.4 L3.25 3.6 L6.1 0.4" fill="none" stroke="#a8a8a8" stroke-width="1.3"/></svg>
<svg style="left:1490px;top:173px;" width="24" height="21" viewBox="0 0 24 21"><path d="M3.500 13.500 L8 1.500 Q8.800 0.700 10 0.700 H21 Q23.300 0.700 23 3 L19.500 14 Z" fill="#ece8ee" stroke="#a8a8a8" stroke-width="1.200" stroke-linejoin="round"/>
<path d="M3.500 13.500 H18 Q19.500 13.500 19.500 14.500 L17.500 19 Q17 20 15.500 20 H3 Q0.500 20 0.800 17.500 Q1.200 14 3.500 13.500 Z" fill="#a8a8a8"/>
<path d="M19.500 14 L23 3 V8 L18 19 Z" fill="#a8a8a8"/></svg>
<span class="t" style='left:1517.28px;top:176.00px;font-size:18px;color:#a3a3a3;transform:scaleX(0.9770);'>Effets</span>
<svg style="left:1570px;top:182.5px;" width="6.5" height="4.6" viewBox="0 0 6.5 4.6"><path d="M0.4 0.4 L3.25 3.6 L6.1 0.4" fill="none" stroke="#a8a8a8" stroke-width="1.3"/></svg>
<span class="t" style='left:1338.23px;top:213.00px;font-size:15.2px;color:#444444;transform:scaleX(1.0169);'>Dessin</span>
<svg style="left:1635.5px;top:216px;" width="12" height="11" viewBox="0 0 12 11"><path d="M0.6 8 V0.6 H8" fill="none" stroke="#b9b9b9" stroke-width="1.1"/><path d="M3.5 3.5 L10 10 M10 5.2 V10 H5.2" fill="none" stroke="#b9b9b9" stroke-width="1.2"/></svg>
<svg style="left:1671px;top:106px;" width="20" height="20" viewBox="0 0 20 20"><circle cx="12" cy="7.300" r="5.800" fill="none" stroke="#3a78b8" stroke-width="2"/>
<path d="M7.800 11.500 L1.200 18.300" stroke="#3a78b8" stroke-width="2.600" stroke-linecap="round"/></svg>
<span class="t" style='left:1696.11px;top:108.00px;font-size:18px;color:#262626;transform:scaleX(0.9260);'>Rechercher</span>
<span class="t" style='left:1669.97px;top:136.00px;font-size:14.5px;color:#444;transform:scaleX(1.0667);'>ab</span>
<span class="t" style='left:1678.42px;top:136.00px;font-size:14.5px;color:#8a55b0;transform:scaleX(1.0769);'>b</span>
<span class="t" style='left:1677.00px;top:147.00px;font-size:14.5px;color:#444;'>ac</span>
<span class="t" style='left:1684.98px;top:147.00px;font-size:14.5px;color:#2f6fb5;transform:scaleX(1.0400);'>c</span>
<svg style="left:1670px;top:153px;" width="8" height="7" viewBox="0 0 8 7"><path d="M0.500 3.500 H6 M3.800 1 L6.300 3.500 L3.800 6" fill="none" stroke="#2f6fb5" stroke-width="1.300"/></svg>
<span class="t" style='left:1696.06px;top:142.00px;font-size:18px;color:#262626;transform:scaleX(0.9589);'>Remplacer</span>
<svg style="left:1795.5px;top:149.5px;" width="6.5" height="4.6" viewBox="0 0 6.5 4.6"><path d="M0.4 0.4 L3.25 3.6 L6.1 0.4" fill="none" stroke="#444" stroke-width="1.3"/></svg>
<svg style="left:1675px;top:173px;" width="15" height="22" viewBox="0 0 15 22"><path d="M0.700 1 V17 L4.800 13.300 L8 20.300 L10.500 19.200 L7.500 12.300 H13 Z" fill="#fff" stroke="#444" stroke-width="1.100" stroke-linejoin="round"/></svg>
<span class="t" style='left:1696.78px;top:176.00px;font-size:18px;color:#262626;transform:scaleX(0.9646);'>Sélectionner</span>
<svg style="left:1801.25px;top:182.5px;" width="6.5" height="4.6" viewBox="0 0 6.5 4.6"><path d="M0.4 0.4 L3.25 3.6 L6.1 0.4" fill="none" stroke="#444" stroke-width="1.3"/></svg>
<span class="t" style='left:1716.17px;top:213.00px;font-size:15.2px;color:#444444;transform:scaleX(1.0621);'>Édition</span>
<svg style="left:1893px;top:219px;" width="15" height="9" viewBox="0 0 15 9"><path d="M0.500 8 L7.300 1 L14.100 8" fill="none" stroke="#444" stroke-width="1.300"/></svg>
<div style="left:309px;top:235px;width:1px;height:752px;background:#c0c0c0;"></div>
<div style="left:312px;top:984px;width:1608px;height:1px;background:#c0c0c0;"></div>
<div style="left:280px;top:235px;width:25px;height:751px;background:#dcdcdc;"></div>
<div style="left:280px;top:235px;width:25px;height:25px;background:#ffffff;border:1px solid #b9b9b9;"></div>
<div style="left:280px;top:260px;width:25px;height:693px;background:#ffffff;border:1px solid #ababab;"></div>
<div style="left:280px;top:961px;width:25px;height:25px;background:#ffffff;border:1px solid #c9c9c9;"></div>
<svg style="left:287px;top:244px;" width="11" height="6" viewBox="0 0 11 6"><path d="M0 6 L5.500 0 L11 6 Z" fill="#777"/></svg>
<svg style="left:287px;top:971px;" width="11" height="6" viewBox="0 0 11 6"><path d="M0 0 L5.500 6 L11 0 Z" fill="#777"/></svg>
<span class="t" style='left:19.42px;top:256.00px;font-size:22.5px;color:#4a4a4a;transform:scaleX(0.6154);'>1</span>
<span class="t" style='left:17.81px;top:401.00px;font-size:22.5px;color:#4a4a4a;transform:scaleX(0.9905);'>2</span>
<span class="t" style='left:17.97px;top:545.00px;font-size:22.5px;color:#c9503a;transform:scaleX(0.9767);'>3</span>
<span class="t" style='left:17.49px;top:689.00px;font-size:22.5px;color:#4a4a4a;transform:scaleX(1.0174);'>4</span>
<span class="t" style='left:18.05px;top:833.00px;font-size:22.5px;color:#4a4a4a;transform:scaleX(0.9524);'>5</span>
<div style="left:53px;top:263px;width:199px;height:113px;background:#ffffff;border:1px solid #c6c6c6;"></div>
<div style="left:53px;top:407px;width:199px;height:113px;background:#ffffff;border:1px solid #c6c6c6;"></div>
<div style="left:48.8px;top:546.7px;width:207.4px;height:121.6px;background:#b7472a;"></div>
<div style="left:53px;top:551px;width:199px;height:113px;background:#ffffff;"></div>
<div style="left:53px;top:695px;width:199px;height:113px;background:#ffffff;border:1px solid #c6c6c6;"></div>
<div style="left:53px;top:839px;width:199px;height:113px;background:#ffffff;border:1px solid #c6c6c6;"></div>
<span class="t" style='left:88.66px;top:282.00px;font-size:11px;color:#000;font-weight:700;transform:scaleX(0.8583);'>PROPOSITION SEANCE EPS</span>
<div style="left:88.5px;top:293.6px;width:129.6px;height:1px;background:#000;"></div>
<span class="t" style='left:95.43px;top:296.00px;font-size:11px;color:#000;font-weight:700;transform:scaleX(0.8935);'>KOUTIO OCTOBRE 2021</span>
<div style="left:95.5px;top:307.4px;width:115px;height:1px;background:#000;"></div>
<div style="left:140.25px;top:327.00px;width:0;height:0;transform:scale(0.2500);transform-origin:0 0;">
<span class="t" style='left:-1.22px;top:-16.00px;font-size:17.2px;color:#0a0a0a;transform:scaleX(0.9743);'>Principes généraux</span>
</div>
<div style="left:92.10px;top:333.90px;width:0;height:0;transform:scale(0.2500);transform-origin:0 0;">
<span class="t" style='left:-0.71px;top:-16.00px;font-size:17.2px;color:#0a0a0a;transform:scaleX(0.9489);'>-Remise en forme générale des élèves après 6 semaines de confinement</span>
</div>
<div style="left:99.50px;top:340.80px;width:0;height:0;transform:scale(0.2500);transform-origin:0 0;">
<span class="t" style='left:-0.71px;top:-16.00px;font-size:17.2px;color:#0a0a0a;transform:scaleX(0.9468);'>-Respect des impératifs sanitaires (2m d’espace entre les élèves)</span>
</div>
<div style="left:86.60px;top:347.70px;width:0;height:0;transform:scale(0.2500);transform-origin:0 0;">
<span class="t" style='left:-0.72px;top:-16.00px;font-size:17.2px;color:#0a0a0a;transform:scaleX(0.9651);'>-Implication de l’état de santé sur la gravité de la maladie (surpoids et diabète)</span>
</div>
<div style="left:81.45px;top:354.90px;width:0;height:0;transform:scale(0.2500);transform-origin:0 0;">
<span class="t" style='left:-0.71px;top:-16.00px;font-size:17.2px;color:#0a0a0a;transform:scaleX(0.9486);'>-Besoin de pouvoir fonctionner avec trois classes en même temps sur le plateau EPS</span>
</div>
<span class="t" style='left:75.75px;top:415.00px;font-size:8.2px;color:#5a5a5a;'>Activité de remise en forme sous forme de</span>
<span class="t" style='left:126.24px;top:425.00px;font-size:8.2px;color:#5a5a5a;transform:scaleX(1.0472);'>circuit training</span>
<div style="left:68.60px;top:464.00px;width:0;height:0;transform:scale(0.2500);transform-origin:0 0;">
<span class="t" style='left:-1.01px;top:-16.00px;font-size:17.6px;color:#2a2a2a;transform:scaleX(1.3474);'>•</span>
</div>
<div style="left:72.90px;top:464.00px;width:0;height:0;transform:scale(0.2500);transform-origin:0 0;">
<span class="t" style='left:-1.65px;top:-16.00px;font-size:17.6px;color:#2a2a2a;transform:scaleX(1.0983);'>Défi sur trois niveaux: individuel, classe et collège. Réaliser le plus grand</span>
</div>
<div style="left:72.90px;top:469.00px;width:0;height:0;transform:scale(0.2500);transform-origin:0 0;">
<span class="t" style='left:-1.39px;top:-16.00px;font-size:17.6px;color:#2a2a2a;transform:scaleX(1.1118);'>nombre de répétition pour chaque exercices proposés.</span>
</div>
<div style="left:68.60px;top:476.10px;width:0;height:0;transform:scale(0.2500);transform-origin:0 0;">
<span class="t" style='left:-1.01px;top:-16.00px;font-size:17.6px;color:#2a2a2a;transform:scaleX(1.3474);'>•</span>
</div>
<div style="left:72.90px;top:476.10px;width:0;height:0;transform:scale(0.2500);transform-origin:0 0;">
<span class="t" style='left:-1.68px;top:-16.00px;font-size:17.6px;color:#2a2a2a;transform:scaleX(1.1218);'>Lien entre l’activité physique et la lutte contre le surpoids et le diabète.</span>
</div>
<div style="left:72.90px;top:482.00px;width:0;height:0;transform:scale(0.2500);transform-origin:0 0;">
<span class="t" style='left:-1.63px;top:-16.00px;font-size:17.6px;color:#2a2a2a;transform:scaleX(1.0895);'>Lien avec calorie (1 burpee= 1calorie, est ce qu’on extrapoler aux autres</span>
</div>
<div style="left:72.90px;top:487.00px;width:0;height:0;transform:scale(0.2500);transform-origin:0 0;">
<span class="t" style='left:-0.76px;top:-16.00px;font-size:17.6px;color:#2a2a2a;transform:scaleX(1.0131);'>exos? Cyrille?)</span>
</div>
<div style="left:53px;top:551px;width:199px;height:113px;overflow:hidden;"><div style="left:0;top:0;width:1920px;height:1080px;transform-origin:0 0;transform:translate(-71.35px,-36.84px) scale(0.15492);">
<svg style="left:0px;top:0px;" width="1920" height="1080" viewBox="0 0 1920 1080"><g fill="#0ba94f" stroke="#2a6570" stroke-width="1.2" stroke-linejoin="miter"><polygon points="798,509.4 813.6,530.3 875.3,484.1 883.6,495 888.7,457.2 851.7,452.2 859.4,463"/><polygon points="1262.4,438.9 1247,459.4 1309.1,505.8 1301.3,516.4 1338,510.6 1332.4,473.7 1324.4,484.4"/><polygon points="1297.6,710.9 1312.4,732.2 1248.7,776.1 1256.4,787.6 1219.8,780.2 1226.3,743.7 1233.9,754.4"/><polygon points="951.3,782.8 940.6,806.1 870.6,773.3 864.7,786.1 852,750.2 886.9,737.8 881.1,750.2"/></g></svg>
<div style="left:1001px;top:314px;width:159px;height:140px;background:#fafafa;"></div>
<svg style="left:980px;top:300px;" width="220" height="200" viewBox="0 0 1188.0 1080.0">
<g fill="#000">
<ellipse cx="318" cy="238" rx="33" ry="38"/>
<path d="M299 266 L300 290 L250 310 Q232 318 232 345 L244 420 L248 470 L241 532 L242 586 L250 592 L244 652 Q243 692 256 716 L244 746 Q238 776 255 781 L276 778 Q284 760 279 720 L291 652 L301 592 L313 562 L325 592 L338 652 L343 716 L334 746 Q338 778 353 779 L373 776 Q381 760 370 740 L364 716 Q379 682 375 642 L379 592 L386 586 L386 532 L380 470 L384 420 L398 345 Q398 318 380 310 L337 290 L338 266 Z"/>
<g fill="none" stroke="#000" stroke-linecap="round" stroke-linejoin="round">
<path d="M238 335 L222 440" stroke-width="30"/><path d="M222 440 L204 530" stroke-width="22"/><path d="M203 535 L204 560" stroke-width="16"/>
<path d="M394 335 L408 440" stroke-width="30"/><path d="M408 440 L424 530" stroke-width="22"/><path d="M426 535 L428 562" stroke-width="16"/>
</g>
<ellipse cx="737" cy="275" rx="31" ry="37"/>
<path d="M716 300 H758 V330 H716 Z"/>
<path d="M672 322 Q737 300 802 322 L798 420 L802 505 L672 505 L676 420 Z"/>
<g fill="none" stroke="#000" stroke-linecap="round" stroke-linejoin="round">
<path d="M684 335 L652 245" stroke-width="40"/>
<path d="M652 245 L700 170" stroke-width="30"/>
<path d="M790 335 L828 245" stroke-width="40"/>
<path d="M828 245 L792 170" stroke-width="30"/>
<path d="M700 168 L710 140" stroke-width="34"/>
<path d="M792 168 L790 140" stroke-width="34"/>
<path d="M690 128 L686 112 M702 124 L703 108 M714 124 L718 110 M724 130 L732 120 M730 152 L738 160" stroke-width="8"/>
<path d="M808 128 L814 112 M796 124 L795 108 M784 124 L780 110 M774 130 L766 120 M768 152 L760 160" stroke-width="8"/>
<path d="M668 585 L600 690" stroke-width="52"/>
<path d="M600 690 L578 722" stroke-width="34"/>
<path d="M806 585 L850 690" stroke-width="52"/>
<path d="M850 690 L862 722" stroke-width="34"/>
<path d="M570 740 L558 766" stroke-width="30"/>
<path d="M868 738 L880 762" stroke-width="30"/>
</g>
<path d="M670 495 L802 495 L848 590 L838 610 L766 612 L737 566 L708 612 L630 606 L620 588 Z"/>
</g></svg>
<span class="t" style='left:1045.83px;top:459.00px;font-size:19.7px;color:#000000;transform:scaleX(1.0858);'>Jumping jack</span>
<span class="t" style='left:981.03px;top:515.00px;font-size:45.3px;color:#000;font-weight:700;transform:scaleX(0.8888);'>Le plus de</span>
<span class="t" style='left:940.27px;top:572.00px;font-size:45.3px;color:#000;font-weight:700;transform:scaleX(0.9435);'>répétitions en</span>
<span class="t" style='left:997.65px;top:630.00px;font-size:45.3px;color:#000;font-weight:700;transform:scaleX(1.0515);text-shadow:1.5px 1.5px 2px rgba(0,0,0,0.45);'>30’’/30’’</span>
<div style="left:997px;top:675.6px;width:168px;height:3.6px;background:#000;box-shadow:1.5px 1.5px 2px rgba(0,0,0,0.4);"></div>
<span class="t" style='left:1007.00px;top:689.00px;font-size:42.6px;color:#000;transform:scaleX(0.9952);text-shadow:1.5px 1.5px 2px rgba(0,0,0,0.45);'>4 séries</span>
<svg style="left:507px;top:600.5px;" width="19" height="33" viewBox="0 0 19 33"><path d="M1 27.500 Q0.500 30.500 3.500 31.500 Q9.500 33 15.500 31.500 Q18.500 30.500 18 27.500 L15 25.500 H4 Z" fill="#d9531f"/>
<path d="M7.500 1.200 Q9.500 0.300 11.500 1.200 L15.800 27 Q9.500 29.800 3.200 27 Z" fill="#e2591f"/>
<path d="M6.600 7 Q9.500 8 12.400 7 L13.400 12.500 Q9.500 13.800 5.600 12.500 Z" fill="#f7eee8"/>
<path d="M4.800 17.500 Q9.500 19 14.200 17.500 L15.100 22.800 Q9.500 24.500 3.900 22.800 Z" fill="#f7eee8"/></svg>
<svg style="left:892.5px;top:602px;" width="19" height="33" viewBox="0 0 19 33"><path d="M1 27.500 Q0.500 30.500 3.500 31.500 Q9.500 33 15.500 31.500 Q18.500 30.500 18 27.500 L15 25.500 H4 Z" fill="#d9531f"/>
<path d="M7.500 1.200 Q9.500 0.300 11.500 1.200 L15.800 27 Q9.500 29.800 3.200 27 Z" fill="#e2591f"/>
<path d="M6.600 7 Q9.500 8 12.400 7 L13.400 12.500 Q9.500 13.800 5.600 12.500 Z" fill="#f7eee8"/>
<path d="M4.800 17.500 Q9.500 19 14.200 17.500 L15.100 22.800 Q9.500 24.500 3.900 22.800 Z" fill="#f7eee8"/></svg>
<svg style="left:520px;top:620px;" width="380" height="20" viewBox="0 0 380 20"><path d="M8.500 9.400 H369" stroke="#000" stroke-width="1.400" fill="none"/>
<path d="M14.500 4.200 L8.200 9.400 L14.500 14.600 M363.500 4.200 L369.800 9.400 L363.500 14.600" stroke="#000" stroke-width="1.400" fill="none"/></svg>
<svg style="left:490px;top:540px;" width="440" height="160" viewBox="0 0 1920.0 698.2">
<g fill="#000" stroke="#000" stroke-linejoin="round" stroke-linecap="round">
<ellipse cx="958" cy="111" rx="16" ry="20" stroke="none"/>
<path d="M946 128 L972 128 L1003 148 L1008 220 L996 238 L966 232 L958 200 L950 160 Z" stroke="none"/>
<path d="M990 140 L1024 160 L1028 202" fill="none" stroke-width="12"/>
<path d="M952 152 L942 180 L914 173" fill="none" stroke-width="11"/>
<path d="M992 226 L1010 270 L1068 244" fill="none" stroke-width="20"/>
<path d="M1064 238 L1096 249" fill="none" stroke-width="9"/>
<path d="M974 224 L942 264 L926 322" fill="none" stroke-width="18"/>
<path d="M892 330 L926 332" fill="none" stroke-width="11"/>
</g></svg>
<span class="t" style='left:623.03px;top:663.00px;font-size:20.2px;color:#000000;transform:scaleX(1.0699);'>Course de 20 mètres</span>
<span class="t" style='left:1421.33px;top:690.00px;font-size:19.7px;color:#000000;transform:scaleX(1.1151);'>Burpee</span>
<span class="t" style='left:1045.21px;top:908.00px;font-size:19.7px;color:#000000;transform:scaleX(1.0925);'>Squat</span>
<svg style="left:1330px;top:540px;" width="280" height="180" viewBox="0 0 1680.0 1080.0">
<g stroke-linecap="round" stroke-linejoin="round">
<!-- fig 1 standing -->
<path d="M150 770 L148 790 L200 792 L196 775 Z M205 780 L200 800 L256 800 L250 782 Z" fill="#d6d6d6"/>
<path d="M164 560 L160 680 L168 775" fill="none" stroke="#bfbfbf" stroke-width="42"/>
<path d="M214 560 L222 680 L226 780" fill="none" stroke="#bfbfbf" stroke-width="38"/>
<path d="M246 390 L258 480 L262 560" fill="none" stroke="#bfbfbf" stroke-width="22"/>
<path d="M150 350 Q195 336 244 362 L252 430 L238 520 L232 570 L144 570 L132 480 L122 400 Z" fill="#bfbfbf"/>
<path d="M134 372 Q190 342 242 372 L246 440 L215 478 L150 470 L126 425 Z" fill="#dc4a29"/>
<path d="M180 358 L176 480 M150 400 L165 455 M215 395 L205 455" stroke="#d6d6d6" stroke-width="8" fill="none"/>
<ellipse cx="243" cy="412" rx="13" ry="36" fill="#dc4a29"/>
<ellipse cx="182" cy="543" rx="38" ry="28" fill="#dc4a29"/><ellipse cx="184" cy="545" rx="4" ry="24" fill="#d6d6d6"/>
<ellipse cx="162" cy="682" rx="19" ry="46" fill="#dc4a29"/>
<ellipse cx="214" cy="688" rx="17" ry="46" fill="#dc4a29"/>
<ellipse cx="195" cy="306" rx="27" ry="30" fill="#7d7d7d"/><ellipse cx="204" cy="318" rx="15" ry="16" fill="#a8a8a8"/>
<!-- fig 2 squat -->
<g transform="translate(0 0)">
<path d="M395 745 L365 755 L372 775 L430 788 L445 770 L420 752 M508 745 L505 762 L548 772 L550 760 Z" fill="#d6d6d6"/>
<path d="M478 668 L440 720 L395 752" stroke="#bfbfbf" stroke-width="26" fill="none"/>
<path d="M508 600 L512 680 L518 748" stroke="#bfbfbf" stroke-width="19" fill="none"/>
<path d="M478 548 Q418 548 380 612 L352 662 Q338 705 385 716 L452 700 L504 640 L512 580 Z" fill="#bfbfbf"/>
<path d="M398 592 Q440 556 500 572 L508 612 L470 642 L405 628 Z" fill="#dc4a29"/>
<path d="M420 585 L480 600" stroke="#d6d6d6" stroke-width="7" fill="none"/>
<ellipse cx="375" cy="680" rx="34" ry="34" fill="#dc4a29"/><ellipse cx="392" cy="682" rx="4" ry="28" fill="#d6d6d6"/>
<path d="M425 672 L490 672" stroke="#dc4a29" stroke-width="30" fill="none"/>
<ellipse cx="508" cy="628" rx="13" ry="34" fill="#dc4a29"/>
<ellipse cx="498" cy="526" rx="25" ry="24" fill="#7d7d7d"/><ellipse cx="505" cy="534" rx="14" ry="13" fill="#a8a8a8"/>
</g>
<!-- fig 3 plank -->
<path d="M604 800 L600 830 L640 868 L662 850 L650 810 Z" fill="#d6d6d6"/>
<path d="M930 592 L812 646 L715 735 L632 820" stroke="#bfbfbf" stroke-width="52" fill="none"/>
<path d="M950 612 L978 690 L990 742" stroke="#bfbfbf" stroke-width="22" fill="none"/>
<path d="M865 650 L875 705" stroke="#bfbfbf" stroke-width="16" fill="none"/>
<path d="M980 740 L1024 756 M868 705 L900 712" stroke="#d6d6d6" stroke-width="13" fill="none"/>
<path d="M850 588 Q905 556 950 586 L935 628 L868 640 Z" fill="#dc4a29"/>
<path d="M870 590 L930 606" stroke="#d6d6d6" stroke-width="7" fill="none"/>
<ellipse cx="815" cy="644" rx="42" ry="25" fill="#dc4a29" transform="rotate(-18 815 644)"/>
<path d="M690 742 L790 696" stroke="#dc4a29" stroke-width="26" fill="none"/>
<path d="M672 742 L740 742" stroke="#dc4a29" stroke-width="24" fill="none"/>
<ellipse cx="962" cy="648" rx="14" ry="36" fill="#dc4a29" transform="rotate(-12 962 648)"/>
<ellipse cx="962" cy="553" rx="25" ry="24" fill="#7d7d7d"/><ellipse cx="970" cy="562" rx="14" ry="13" fill="#a8a8a8"/>
<!-- fig 4 squat -->
<g transform="translate(738 22)">
<path d="M395 745 L365 755 L372 775 L430 788 L445 770 L420 752 M508 745 L505 762 L548 772 L550 760 Z" fill="#d6d6d6"/>
<path d="M478 668 L440 720 L395 752" stroke="#bfbfbf" stroke-width="26" fill="none"/>
<path d="M508 600 L512 680 L518 748" stroke="#bfbfbf" stroke-width="19" fill="none"/>
<path d="M478 548 Q418 548 380 612 L352 662 Q338 705 385 716 L452 700 L504 640 L512 580 Z" fill="#bfbfbf"/>
<path d="M398 592 Q440 556 500 572 L508 612 L470 642 L405 628 Z" fill="#dc4a29"/>
<path d="M420 585 L480 600" stroke="#d6d6d6" stroke-width="7" fill="none"/>
<ellipse cx="375" cy="680" rx="34" ry="34" fill="#dc4a29"/><ellipse cx="392" cy="682" rx="4" ry="28" fill="#d6d6d6"/>
<path d="M425 672 L490 672" stroke="#dc4a29" stroke-width="30" fill="none"/>
<ellipse cx="508" cy="628" rx="13" ry="34" fill="#dc4a29"/>
<ellipse cx="498" cy="526" rx="25" ry="24" fill="#7d7d7d"/><ellipse cx="505" cy="534" rx="14" ry="13" fill="#a8a8a8"/>
</g>
<!-- fig 5 jump -->
<path d="M1388 690 L1392 730 L1410 740 L1412 700 Z M1432 700 L1438 745 L1456 748 L1458 705 Z" fill="#d6d6d6"/>
<path d="M1402 470 L1400 600 L1398 705" stroke="#bfbfbf" stroke-width="38" fill="none"/>
<path d="M1450 470 L1452 600 L1447 715" stroke="#bfbfbf" stroke-width="36" fill="none"/>
<path d="M1366 248 Q1425 222 1484 246 L1474 340 L1462 465 L1384 465 L1378 340 Z" fill="#bfbfbf"/>
<path d="M1378 245 L1386 165 L1404 96" stroke="#bfbfbf" stroke-width="24" fill="none"/>
<path d="M1478 238 L1500 160 L1516 90" stroke="#bfbfbf" stroke-width="24" fill="none"/>
<path d="M1408 78 L1416 98 M1520 76 L1526 98" stroke="#d6d6d6" stroke-width="20" fill="none"/>
<path d="M1374 212 L1382 268 M1490 200 L1470 258" stroke="#dc4a29" stroke-width="26" fill="none"/>
<path d="M1376 282 Q1415 262 1450 290 L1444 372 L1390 372 Z" fill="#dc4a29"/>
<path d="M1410 280 L1412 370" stroke="#d6d6d6" stroke-width="8" fill="none"/>
<ellipse cx="1414" cy="462" rx="33" ry="28" fill="#dc4a29"/><ellipse cx="1415" cy="464" rx="4" ry="24" fill="#d6d6d6"/>
<ellipse cx="1398" cy="610" rx="17" ry="40" fill="#dc4a29"/>
<ellipse cx="1446" cy="618" rx="16" ry="40" fill="#dc4a29"/>
<ellipse cx="1474" cy="520" rx="8" ry="44" fill="#dc4a29"/>
<ellipse cx="1426" cy="226" rx="28" ry="29" fill="#7d7d7d"/><ellipse cx="1432" cy="236" rx="15" ry="15" fill="#a8a8a8"/>
</g></svg>
<svg style="left:990px;top:750px;" width="190" height="190" viewBox="0 0 1080.0 1080.0">
<g stroke-linejoin="round" stroke-linecap="round">
<!-- standing -->
<ellipse cx="366" cy="718" rx="30" ry="17" fill="#fff" stroke="#8c8c8c" stroke-width="3"/>
<path d="M420 412 Q432 460 418 522 L422 640 L418 716 L394 716 L376 600 L348 480 L342 410 Z" fill="#2e1a50"/>
<path d="M395 716 L420 716 L425 745 L400 750 Z" fill="#f1d8c9"/>
<path d="M335 775 Q335 755 370 745 L400 740 Q430 745 432 770 Q425 790 385 792 Q340 792 335 775 Z" fill="#fff" stroke="#8c8c8c" stroke-width="3"/>
<path d="M140 236 Q150 230 345 232 L348 264 Q200 262 185 255 Q150 250 140 236 Z" fill="#f1d8c9" stroke="#8c8c8c" stroke-width="2.500"/>
<path d="M348 232 Q388 218 428 234 L426 330 L414 408 L342 412 L338 330 Z" fill="#c75fdc"/>
<path d="M378 195 H402 V228 H378 Z" fill="#f1d8c9"/>
<ellipse cx="378" cy="172" rx="26" ry="31" fill="#f1d8c9"/>
<path d="M362 135 Q385 108 420 125 Q440 145 432 185 Q440 230 436 285 Q428 250 420 200 Q405 190 402 160 Q385 140 362 135 Z" fill="#b4a486"/>
<!-- squatting -->
<ellipse cx="725" cy="708" rx="35" ry="17" fill="#fff" stroke="#8c8c8c" stroke-width="3"/>
<path d="M690 560 Q760 540 845 540 Q892 580 870 616 Q840 642 780 630 L742 620 L762 700 L736 702 L700 640 Q675 600 690 560 Z" fill="#2e1a50"/>
<path d="M738 700 L762 700 L772 735 L748 742 Z" fill="#f1d8c9"/>
<path d="M685 765 Q688 745 725 735 L760 735 Q788 745 788 765 Q780 780 735 780 Q690 780 685 765 Z" fill="#fff" stroke="#8c8c8c" stroke-width="3"/>
<path d="M445 436 Q455 430 660 433 L662 466 Q500 464 490 456 Q455 450 445 436 Z" fill="#f1d8c9" stroke="#8c8c8c" stroke-width="2.500"/>
<path d="M655 436 L722 410 Q762 430 792 480 L842 545 L762 566 L702 532 L692 468 L660 470 Z" fill="#c75fdc"/>
<path d="M690 400 L715 395 L722 420 L698 428 Z" fill="#f1d8c9"/>
<ellipse cx="682" cy="384" rx="26" ry="31" fill="#f1d8c9"/>
<path d="M662 345 Q690 318 725 335 Q745 355 738 390 Q765 410 778 455 Q755 430 730 410 Q712 400 708 372 Q690 352 662 345 Z" fill="#b4a486"/>
</g></svg>
</div></div>
<div style="left:99.00px;top:699.60px;width:0;height:0;transform:scale(0.2500);transform-origin:0 0;">
<span class="t" style='left:-1.28px;top:-13.00px;font-size:14.4px;color:#555;transform:scaleX(1.0241);'>FICHE D’OBSERVATION: DEFI KOUTIO CIRCUIT TRAINING</span>
</div>
<svg style="left:0px;top:0px;shape-rendering:geometricPrecision;" width="320" height="1000" viewBox="0 0 320 1000"><rect x="60" y="713.30" width="177" height="6.85" fill="#cfd5ea"/><rect x="60" y="720.15" width="177" height="6.85" fill="#e9ebf5"/><rect x="60" y="727.00" width="177" height="6.85" fill="#cfd5ea"/><rect x="60" y="733.85" width="177" height="6.85" fill="#e9ebf5"/><rect x="60" y="740.70" width="177" height="6.85" fill="#cfd5ea"/><rect x="60" y="701.2" width="177" height="11.3" fill="#4472c4"/><rect x="95.3" y="701.2" width="0.45" height="46.35" fill="#fff" opacity="0.55"/><rect x="131.2" y="701.2" width="0.45" height="46.35" fill="#fff" opacity="0.55"/><rect x="166.3" y="701.2" width="0.45" height="46.35" fill="#fff" opacity="0.55"/><rect x="202.5" y="701.2" width="0.45" height="46.35" fill="#fff" opacity="0.55"/></svg>
<div style="left:61.80px;top:706.30px;width:0;height:0;transform:scale(0.2500);transform-origin:0 0;">
<span class="t" style='left:-0.76px;top:-12.00px;font-size:13.6px;color:#fff;font-weight:700;transform:scaleX(1.0175);'>Prénoms</span>
</div>
<div style="left:103.55px;top:706.30px;width:0;height:0;transform:scale(0.2500);transform-origin:0 0;">
<span class="t" style='left:-0.23px;top:-12.00px;font-size:13.6px;color:#fff;font-weight:700;transform:scaleX(0.9061);'>Jumping Jack</span>
</div>
<div style="left:142.95px;top:706.30px;width:0;height:0;transform:scale(0.2500);transform-origin:0 0;">
<span class="t" style='left:-0.71px;top:-12.00px;font-size:13.6px;color:#fff;font-weight:700;transform:scaleX(0.9434);'>Burpees</span>
</div>
<div style="left:180.00px;top:706.30px;width:0;height:0;transform:scale(0.2500);transform-origin:0 0;">
<span class="t" style='left:-0.48px;top:-12.00px;font-size:13.6px;color:#fff;font-weight:700;transform:scaleX(0.9664);'>Squat</span>
</div>
<div style="left:207.55px;top:706.30px;width:0;height:0;transform:scale(0.2500);transform-origin:0 0;">
<span class="t" style='left:-0.47px;top:-12.00px;font-size:13.6px;color:#fff;font-weight:700;transform:scaleX(0.9356);'>Courses navette</span>
</div>
<div style="left:61.80px;top:717.82px;width:0;height:0;transform:scale(0.2500);transform-origin:0 0;">
<span class="t" style='left:-0.48px;top:-12.00px;font-size:13.6px;color:#333;transform:scaleX(0.9524);'>Série 1</span>
</div>
<div style="left:61.80px;top:724.67px;width:0;height:0;transform:scale(0.2500);transform-origin:0 0;">
<span class="t" style='left:-0.48px;top:-12.00px;font-size:13.6px;color:#333;transform:scaleX(0.9524);'>Série 2</span>
</div>
<div style="left:61.80px;top:731.52px;width:0;height:0;transform:scale(0.2500);transform-origin:0 0;">
<span class="t" style='left:-0.48px;top:-12.00px;font-size:13.6px;color:#333;transform:scaleX(0.9524);'>Série 3</span>
</div>
<div style="left:61.80px;top:738.37px;width:0;height:0;transform:scale(0.2500);transform-origin:0 0;">
<span class="t" style='left:-0.47px;top:-12.00px;font-size:13.6px;color:#333;transform:scaleX(0.9467);'>Série 4</span>
</div>
<div style="left:61.80px;top:745.22px;width:0;height:0;transform:scale(0.2500);transform-origin:0 0;">
<span class="t" style='left:0.00px;top:-12.00px;font-size:13.6px;color:#333;font-weight:700;transform:scaleX(0.9836);'>Total</span>
</div>
<div style="left:99.00px;top:755.50px;width:0;height:0;transform:scale(0.2500);transform-origin:0 0;">
<span class="t" style='left:-1.28px;top:-13.00px;font-size:14.4px;color:#555;transform:scaleX(1.0241);'>FICHE D’OBSERVATION: DEFI KOUTIO CIRCUIT TRAINING</span>
</div>
<svg style="left:0px;top:0px;shape-rendering:geometricPrecision;" width="320" height="1000" viewBox="0 0 320 1000"><rect x="60" y="770.30" width="177" height="6.70" fill="#cfd5ea"/><rect x="60" y="777.00" width="177" height="6.70" fill="#e9ebf5"/><rect x="60" y="783.70" width="177" height="6.70" fill="#cfd5ea"/><rect x="60" y="790.40" width="177" height="6.70" fill="#e9ebf5"/><rect x="60" y="797.10" width="177" height="6.70" fill="#cfd5ea"/><rect x="60" y="758" width="177" height="11.5" fill="#4472c4"/><rect x="95.3" y="758" width="0.45" height="45.80" fill="#fff" opacity="0.55"/><rect x="131.2" y="758" width="0.45" height="45.80" fill="#fff" opacity="0.55"/><rect x="166.3" y="758" width="0.45" height="45.80" fill="#fff" opacity="0.55"/><rect x="202.5" y="758" width="0.45" height="45.80" fill="#fff" opacity="0.55"/></svg>
<div style="left:61.80px;top:763.10px;width:0;height:0;transform:scale(0.2500);transform-origin:0 0;">
<span class="t" style='left:-0.76px;top:-12.00px;font-size:13.6px;color:#fff;font-weight:700;transform:scaleX(1.0175);'>Prénoms</span>
</div>
<div style="left:103.55px;top:763.10px;width:0;height:0;transform:scale(0.2500);transform-origin:0 0;">
<span class="t" style='left:-0.23px;top:-12.00px;font-size:13.6px;color:#fff;font-weight:700;transform:scaleX(0.9061);'>Jumping Jack</span>
</div>
<div style="left:142.95px;top:763.10px;width:0;height:0;transform:scale(0.2500);transform-origin:0 0;">
<span class="t" style='left:-0.71px;top:-12.00px;font-size:13.6px;color:#fff;font-weight:700;transform:scaleX(0.9434);'>Burpees</span>
</div>
<div style="left:180.00px;top:763.10px;width:0;height:0;transform:scale(0.2500);transform-origin:0 0;">
<span class="t" style='left:-0.48px;top:-12.00px;font-size:13.6px;color:#fff;font-weight:700;transform:scaleX(0.9664);'>Squat</span>
</div>
<div style="left:207.55px;top:763.10px;width:0;height:0;transform:scale(0.2500);transform-origin:0 0;">
<span class="t" style='left:-0.47px;top:-12.00px;font-size:13.6px;color:#fff;font-weight:700;transform:scaleX(0.9356);'>Courses navette</span>
</div>
<div style="left:61.80px;top:774.72px;width:0;height:0;transform:scale(0.2500);transform-origin:0 0;">
<span class="t" style='left:-0.48px;top:-12.00px;font-size:13.6px;color:#333;transform:scaleX(0.9524);'>Série 1</span>
</div>
<div style="left:61.80px;top:781.42px;width:0;height:0;transform:scale(0.2500);transform-origin:0 0;">
<span class="t" style='left:-0.48px;top:-12.00px;font-size:13.6px;color:#333;transform:scaleX(0.9524);'>Série 2</span>
</div>
<div style="left:61.80px;top:788.12px;width:0;height:0;transform:scale(0.2500);transform-origin:0 0;">
<span class="t" style='left:-0.48px;top:-12.00px;font-size:13.6px;color:#333;transform:scaleX(0.9524);'>Série 3</span>
</div>
<div style="left:61.80px;top:794.82px;width:0;height:0;transform:scale(0.2500);transform-origin:0 0;">
<span class="t" style='left:-0.47px;top:-12.00px;font-size:13.6px;color:#333;transform:scaleX(0.9467);'>Série 4</span>
</div>
<div style="left:61.80px;top:801.52px;width:0;height:0;transform:scale(0.2500);transform-origin:0 0;">
<span class="t" style='left:0.00px;top:-12.00px;font-size:13.6px;color:#333;font-weight:700;transform:scaleX(0.9836);'>Total</span>
</div>
<div style="left:112.25px;top:843.60px;width:0;height:0;transform:scale(0.2500);transform-origin:0 0;">
<span class="t" style='left:-1.25px;top:-13.00px;font-size:14.4px;color:#555;'>FICHE D’OBSERVATION: DEFI KOUTIO COURSE</span>
</div>
<svg style="left:0px;top:0px;shape-rendering:geometricPrecision;" width="320" height="1000" viewBox="0 0 320 1000"><rect x="60" y="852.50" width="184" height="5.90" fill="#cfd5ea"/><rect x="60" y="858.40" width="184" height="5.90" fill="#e9ebf5"/><rect x="60" y="864.30" width="184" height="5.90" fill="#cfd5ea"/><rect x="60" y="870.20" width="184" height="5.90" fill="#e9ebf5"/><rect x="60" y="845.5" width="184" height="6.2" fill="#4472c4"/><rect x="90.3" y="845.5" width="0.45" height="30.60" fill="#fff" opacity="0.55"/><rect x="213.2" y="845.5" width="0.45" height="30.60" fill="#fff" opacity="0.55"/></svg>
<div style="left:61.80px;top:850.60px;width:0;height:0;transform:scale(0.2500);transform-origin:0 0;">
<span class="t" style='left:-0.74px;top:-12.00px;font-size:13.6px;color:#fff;font-weight:700;transform:scaleX(0.9825);'>Prénoms</span>
</div>
<div style="left:92.00px;top:850.60px;width:0;height:0;transform:scale(0.2500);transform-origin:0 0;">
<span class="t" style='left:-0.72px;top:-12.00px;font-size:13.6px;color:#fff;font-weight:700;transform:scaleX(0.9664);'>Nombre de relais (40m)</span>
</div>
<div style="left:214.80px;top:850.60px;width:0;height:0;transform:scale(0.2500);transform-origin:0 0;">
<span class="t" style='left:0.00px;top:-12.00px;font-size:13.6px;color:#fff;font-weight:700;transform:scaleX(0.9697);'>Total en mètres</span>
</div>
<div style="left:112.25px;top:880.60px;width:0;height:0;transform:scale(0.2500);transform-origin:0 0;">
<span class="t" style='left:-1.25px;top:-13.00px;font-size:14.4px;color:#555;'>FICHE D’OBSERVATION: DEFI KOUTIO COURSE</span>
</div>
<svg style="left:0px;top:0px;shape-rendering:geometricPrecision;" width="320" height="1000" viewBox="0 0 320 1000"><rect x="60" y="890.30" width="184" height="5.90" fill="#cfd5ea"/><rect x="60" y="896.20" width="184" height="5.90" fill="#e9ebf5"/><rect x="60" y="902.10" width="184" height="5.90" fill="#cfd5ea"/><rect x="60" y="908.00" width="184" height="5.90" fill="#e9ebf5"/><rect x="60" y="883.3" width="184" height="6.2" fill="#4472c4"/><rect x="90.3" y="883.3" width="0.45" height="30.60" fill="#fff" opacity="0.55"/><rect x="213.2" y="883.3" width="0.45" height="30.60" fill="#fff" opacity="0.55"/></svg>
<div style="left:61.80px;top:888.40px;width:0;height:0;transform:scale(0.2500);transform-origin:0 0;">
<span class="t" style='left:-0.74px;top:-12.00px;font-size:13.6px;color:#fff;font-weight:700;transform:scaleX(0.9825);'>Prénoms</span>
</div>
<div style="left:92.00px;top:888.40px;width:0;height:0;transform:scale(0.2500);transform-origin:0 0;">
<span class="t" style='left:-0.72px;top:-12.00px;font-size:13.6px;color:#fff;font-weight:700;transform:scaleX(0.9664);'>Nombre de relais (40m)</span>
</div>
<div style="left:214.80px;top:888.40px;width:0;height:0;transform:scale(0.2500);transform-origin:0 0;">
<span class="t" style='left:0.00px;top:-12.00px;font-size:13.6px;color:#fff;font-weight:700;transform:scaleX(0.9697);'>Total en mètres</span>
</div>
<div style="left:112.25px;top:918.20px;width:0;height:0;transform:scale(0.2500);transform-origin:0 0;">
<span class="t" style='left:-1.25px;top:-13.00px;font-size:14.4px;color:#555;'>FICHE D’OBSERVATION: DEFI KOUTIO COURSE</span>
</div>
<svg style="left:0px;top:0px;shape-rendering:geometricPrecision;" width="320" height="1000" viewBox="0 0 320 1000"><rect x="60" y="927.30" width="184" height="5.90" fill="#cfd5ea"/><rect x="60" y="933.20" width="184" height="5.90" fill="#e9ebf5"/><rect x="60" y="939.10" width="184" height="5.90" fill="#cfd5ea"/><rect x="60" y="945.00" width="184" height="5.90" fill="#e9ebf5"/><rect x="60" y="920.3" width="184" height="6.2" fill="#4472c4"/><rect x="90.3" y="920.3" width="0.45" height="30.60" fill="#fff" opacity="0.55"/><rect x="213.2" y="920.3" width="0.45" height="30.60" fill="#fff" opacity="0.55"/></svg>
<div style="left:61.80px;top:925.40px;width:0;height:0;transform:scale(0.2500);transform-origin:0 0;">
<span class="t" style='left:-0.74px;top:-12.00px;font-size:13.6px;color:#fff;font-weight:700;transform:scaleX(0.9825);'>Prénoms</span>
</div>
<div style="left:92.00px;top:925.40px;width:0;height:0;transform:scale(0.2500);transform-origin:0 0;">
<span class="t" style='left:-0.72px;top:-12.00px;font-size:13.6px;color:#fff;font-weight:700;transform:scaleX(0.9664);'>Nombre de relais (40m)</span>
</div>
<div style="left:214.80px;top:925.40px;width:0;height:0;transform:scale(0.2500);transform-origin:0 0;">
<span class="t" style='left:0.00px;top:-12.00px;font-size:13.6px;color:#fff;font-weight:700;transform:scaleX(0.9697);'>Total en mètres</span>
</div>
<div style="left:462px;top:247px;width:1282px;height:722px;background:#ffffff;border:1px solid #c9c9c9;"></div>
<svg style="left:0px;top:0px;" width="1920" height="1080" viewBox="0 0 1920 1080"><g fill="#0ba94f" stroke="#2a6570" stroke-width="1.2" stroke-linejoin="miter"><polygon points="798,509.4 813.6,530.3 875.3,484.1 883.6,495 888.7,457.2 851.7,452.2 859.4,463"/><polygon points="1262.4,438.9 1247,459.4 1309.1,505.8 1301.3,516.4 1338,510.6 1332.4,473.7 1324.4,484.4"/><polygon points="1297.6,710.9 1312.4,732.2 1248.7,776.1 1256.4,787.6 1219.8,780.2 1226.3,743.7 1233.9,754.4"/><polygon points="951.3,782.8 940.6,806.1 870.6,773.3 864.7,786.1 852,750.2 886.9,737.8 881.1,750.2"/></g></svg>
<div style="left:1001px;top:314px;width:159px;height:140px;background:#fafafa;"></div>
<svg style="left:980px;top:300px;" width="220" height="200" viewBox="0 0 1188.0 1080.0">
<g fill="#000">
<ellipse cx="318" cy="238" rx="33" ry="38"/>
<path d="M299 266 L300 290 L250 310 Q232 318 232 345 L244 420 L248 470 L241 532 L242 586 L250 592 L244 652 Q243 692 256 716 L244 746 Q238 776 255 781 L276 778 Q284 760 279 720 L291 652 L301 592 L313 562 L325 592 L338 652 L343 716 L334 746 Q338 778 353 779 L373 776 Q381 760 370 740 L364 716 Q379 682 375 642 L379 592 L386 586 L386 532 L380 470 L384 420 L398 345 Q398 318 380 310 L337 290 L338 266 Z"/>
<g fill="none" stroke="#000" stroke-linecap="round" stroke-linejoin="round">
<path d="M238 335 L222 440" stroke-width="30"/><path d="M222 440 L204 530" stroke-width="22"/><path d="M203 535 L204 560" stroke-width="16"/>
<path d="M394 335 L408 440" stroke-width="30"/><path d="M408 440 L424 530" stroke-width="22"/><path d="M426 535 L428 562" stroke-width="16"/>
</g>
<ellipse cx="737" cy="275" rx="31" ry="37"/>
<path d="M716 300 H758 V330 H716 Z"/>
<path d="M672 322 Q737 300 802 322 L798 420 L802 505 L672 505 L676 420 Z"/>
<g fill="none" stroke="#000" stroke-linecap="round" stroke-linejoin="round">
<path d="M684 335 L652 245" stroke-width="40"/>
<path d="M652 245 L700 170" stroke-width="30"/>
<path d="M790 335 L828 245" stroke-width="40"/>
<path d="M828 245 L792 170" stroke-width="30"/>
<path d="M700 168 L710 140" stroke-width="34"/>
<path d="M792 168 L790 140" stroke-width="34"/>
<path d="M690 128 L686 112 M702 124 L703 108 M714 124 L718 110 M724 130 L732 120 M730 152 L738 160" stroke-width="8"/>
<path d="M808 128 L814 112 M796 124 L795 108 M784 124 L780 110 M774 130 L766 120 M768 152 L760 160" stroke-width="8"/>
<path d="M668 585 L600 690" stroke-width="52"/>
<path d="M600 690 L578 722" stroke-width="34"/>
<path d="M806 585 L850 690" stroke-width="52"/>
<path d="M850 690 L862 722" stroke-width="34"/>
<path d="M570 740 L558 766" stroke-width="30"/>
<path d="M868 738 L880 762" stroke-width="30"/>
</g>
<path d="M670 495 L802 495 L848 590 L838 610 L766 612 L737 566 L708 612 L630 606 L620 588 Z"/>
</g></svg>
<span class="t" style='left:1045.83px;top:459.00px;font-size:19.7px;color:#000000;transform:scaleX(1.0858);'>Jumping jack</span>
<span class="t" style='left:981.03px;top:515.00px;font-size:45.3px;color:#000;font-weight:700;transform:scaleX(0.8888);'>Le plus de</span>
<span class="t" style='left:940.27px;top:572.00px;font-size:45.3px;color:#000;font-weight:700;transform:scaleX(0.9435);'>répétitions en</span>
<span class="t" style='left:997.65px;top:630.00px;font-size:45.3px;color:#000;font-weight:700;transform:scaleX(1.0515);text-shadow:1.5px 1.5px 2px rgba(0,0,0,0.45);'>30’’/30’’</span>
<div style="left:997px;top:675.6px;width:168px;height:3.6px;background:#000;box-shadow:1.5px 1.5px 2px rgba(0,0,0,0.4);"></div>
<span class="t" style='left:1007.00px;top:689.00px;font-size:42.6px;color:#000;transform:scaleX(0.9952);text-shadow:1.5px 1.5px 2px rgba(0,0,0,0.45);'>4 séries</span>
<svg style="left:507px;top:600.5px;" width="19" height="33" viewBox="0 0 19 33"><path d="M1 27.500 Q0.500 30.500 3.500 31.500 Q9.500 33 15.500 31.500 Q18.500 30.500 18 27.500 L15 25.500 H4 Z" fill="#d9531f"/>
<path d="M7.500 1.200 Q9.500 0.300 11.500 1.200 L15.800 27 Q9.500 29.800 3.200 27 Z" fill="#e2591f"/>
<path d="M6.600 7 Q9.500 8 12.400 7 L13.400 12.500 Q9.500 13.800 5.600 12.500 Z" fill="#f7eee8"/>
<path d="M4.800 17.500 Q9.500 19 14.200 17.500 L15.100 22.800 Q9.500 24.500 3.900 22.800 Z" fill="#f7eee8"/></svg>
<svg style="left:892.5px;top:602px;" width="19" height="33" viewBox="0 0 19 33"><path d="M1 27.500 Q0.500 30.500 3.500 31.500 Q9.500 33 15.500 31.500 Q18.500 30.500 18 27.500 L15 25.500 H4 Z" fill="#d9531f"/>
<path d="M7.500 1.200 Q9.500 0.300 11.500 1.200 L15.800 27 Q9.500 29.800 3.200 27 Z" fill="#e2591f"/>
<path d="M6.600 7 Q9.500 8 12.400 7 L13.400 12.500 Q9.500 13.800 5.600 12.500 Z" fill="#f7eee8"/>
<path d="M4.800 17.500 Q9.500 19 14.200 17.500 L15.100 22.800 Q9.500 24.500 3.900 22.800 Z" fill="#f7eee8"/></svg>
<svg style="left:520px;top:620px;" width="380" height="20" viewBox="0 0 380 20"><path d="M8.500 9.400 H369" stroke="#000" stroke-width="1.400" fill="none"/>
<path d="M14.500 4.200 L8.200 9.400 L14.500 14.600 M363.500 4.200 L369.800 9.400 L363.500 14.600" stroke="#000" stroke-width="1.400" fill="none"/></svg>
<svg style="left:490px;top:540px;" width="440" height="160" viewBox="0 0 1920.0 698.2">
<g fill="#000" stroke="#000" stroke-linejoin="round" stroke-linecap="round">
<ellipse cx="958" cy="111" rx="16" ry="20" stroke="none"/>
<path d="M946 128 L972 128 L1003 148 L1008 220 L996 238 L966 232 L958 200 L950 160 Z" stroke="none"/>
<path d="M990 140 L1024 160 L1028 202" fill="none" stroke-width="12"/>
<path d="M952 152 L942 180 L914 173" fill="none" stroke-width="11"/>
<path d="M992 226 L1010 270 L1068 244" fill="none" stroke-width="20"/>
<path d="M1064 238 L1096 249" fill="none" stroke-width="9"/>
<path d="M974 224 L942 264 L926 322" fill="none" stroke-width="18"/>
<path d="M892 330 L926 332" fill="none" stroke-width="11"/>
</g></svg>
<span class="t" style='left:623.03px;top:663.00px;font-size:20.2px;color:#000000;transform:scaleX(1.0699);'>Course de 20 mètres</span>
<span class="t" style='left:1421.33px;top:690.00px;font-size:19.7px;color:#000000;transform:scaleX(1.1151);'>Burpee</span>
<span class="t" style='left:1045.21px;top:908.00px;font-size:19.7px;color:#000000;transform:scaleX(1.0925);'>Squat</span>
<svg style="left:1330px;top:540px;" width="280" height="180" viewBox="0 0 1680.0 1080.0">
<g stroke-linecap="round" stroke-linejoin="round">
<!-- fig 1 standing -->
<path d="M150 770 L148 790 L200 792 L196 775 Z M205 780 L200 800 L256 800 L250 782 Z" fill="#d6d6d6"/>
<path d="M164 560 L160 680 L168 775" fill="none" stroke="#bfbfbf" stroke-width="42"/>
<path d="M214 560 L222 680 L226 780" fill="none" stroke="#bfbfbf" stroke-width="38"/>
<path d="M246 390 L258 480 L262 560" fill="none" stroke="#bfbfbf" stroke-width="22"/>
<path d="M150 350 Q195 336 244 362 L252 430 L238 520 L232 570 L144 570 L132 480 L122 400 Z" fill="#bfbfbf"/>
<path d="M134 372 Q190 342 242 372 L246 440 L215 478 L150 470 L126 425 Z" fill="#dc4a29"/>
<path d="M180 358 L176 480 M150 400 L165 455 M215 395 L205 455" stroke="#d6d6d6" stroke-width="8" fill="none"/>
<ellipse cx="243" cy="412" rx="13" ry="36" fill="#dc4a29"/>
<ellipse cx="182" cy="543" rx="38" ry="28" fill="#dc4a29"/><ellipse cx="184" cy="545" rx="4" ry="24" fill="#d6d6d6"/>
<ellipse cx="162" cy="682" rx="19" ry="46" fill="#dc4a29"/>
<ellipse cx="214" cy="688" rx="17" ry="46" fill="#dc4a29"/>
<ellipse cx="195" cy="306" rx="27" ry="30" fill="#7d7d7d"/><ellipse cx="204" cy="318" rx="15" ry="16" fill="#a8a8a8"/>
<!-- fig 2 squat -->
<g transform="translate(0 0)">
<path d="M395 745 L365 755 L372 775 L430 788 L445 770 L420 752 M508 745 L505 762 L548 772 L550 760 Z" fill="#d6d6d6"/>
<path d="M478 668 L440 720 L395 752" stroke="#bfbfbf" stroke-width="26" fill="none"/>
<path d="M508 600 L512 680 L518 748" stroke="#bfbfbf" stroke-width="19" fill="none"/>
<path d="M478 548 Q418 548 380 612 L352 662 Q338 705 385 716 L452 700 L504 640 L512 580 Z" fill="#bfbfbf"/>
<path d="M398 592 Q440 556 500 572 L508 612 L470 642 L405 628 Z" fill="#dc4a29"/>
<path d="M420 585 L480 600" stroke="#d6d6d6" stroke-width="7" fill="none"/>
<ellipse cx="375" cy="680" rx="34" ry="34" fill="#dc4a29"/><ellipse cx="392" cy="682" rx="4" ry="28" fill="#d6d6d6"/>
<path d="M425 672 L490 672" stroke="#dc4a29" stroke-width="30" fill="none"/>
<ellipse cx="508" cy="628" rx="13" ry="34" fill="#dc4a29"/>
<ellipse cx="498" cy="526" rx="25" ry="24" fill="#7d7d7d"/><ellipse cx="505" cy="534" rx="14" ry="13" fill="#a8a8a8"/>
</g>
<!-- fig 3 plank -->
<path d="M604 800 L600 830 L640 868 L662 850 L650 810 Z" fill="#d6d6d6"/>
<path d="M930 592 L812 646 L715 735 L632 820" stroke="#bfbfbf" stroke-width="52" fill="none"/>
<path d="M950 612 L978 690 L990 742" stroke="#bfbfbf" stroke-width="22" fill="none"/>
<path d="M865 650 L875 705" stroke="#bfbfbf" stroke-width="16" fill="none"/>
<path d="M980 740 L1024 756 M868 705 L900 712" stroke="#d6d6d6" stroke-width="13" fill="none"/>
<path d="M850 588 Q905 556 950 586 L935 628 L868 640 Z" fill="#dc4a29"/>
<path d="M870 590 L930 606" stroke="#d6d6d6" stroke-width="7" fill="none"/>
<ellipse cx="815" cy="644" rx="42" ry="25" fill="#dc4a29" transform="rotate(-18 815 644)"/>
<path d="M690 742 L790 696" stroke="#dc4a29" stroke-width="26" fill="none"/>
<path d="M672 742 L740 742" stroke="#dc4a29" stroke-width="24" fill="none"/>
<ellipse cx="962" cy="648" rx="14" ry="36" fill="#dc4a29" transform="rotate(-12 962 648)"/>
<ellipse cx="962" cy="553" rx="25" ry="24" fill="#7d7d7d"/><ellipse cx="970" cy="562" rx="14" ry="13" fill="#a8a8a8"/>
<!-- fig 4 squat -->
<g transform="translate(738 22)">
<path d="M395 745 L365 755 L372 775 L430 788 L445 770 L420 752 M508 745 L505 762 L548 772 L550 760 Z" fill="#d6d6d6"/>
<path d="M478 668 L440 720 L395 752" stroke="#bfbfbf" stroke-width="26" fill="none"/>
<path d="M508 600 L512 680 L518 748" stroke="#bfbfbf" stroke-width="19" fill="none"/>
<path d="M478 548 Q418 548 380 612 L352 662 Q338 705 385 716 L452 700 L504 640 L512 580 Z" fill="#bfbfbf"/>
<path d="M398 592 Q440 556 500 572 L508 612 L470 642 L405 628 Z" fill="#dc4a29"/>
<path d="M420 585 L480 600" stroke="#d6d6d6" stroke-width="7" fill="none"/>
<ellipse cx="375" cy="680" rx="34" ry="34" fill="#dc4a29"/><ellipse cx="392" cy="682" rx="4" ry="28" fill="#d6d6d6"/>
<path d="M425 672 L490 672" stroke="#dc4a29" stroke-width="30" fill="none"/>
<ellipse cx="508" cy="628" rx="13" ry="34" fill="#dc4a29"/>
<ellipse cx="498" cy="526" rx="25" ry="24" fill="#7d7d7d"/><ellipse cx="505" cy="534" rx="14" ry="13" fill="#a8a8a8"/>
</g>
<!-- fig 5 jump -->
<path d="M1388 690 L1392 730 L1410 740 L1412 700 Z M1432 700 L1438 745 L1456 748 L1458 705 Z" fill="#d6d6d6"/>
<path d="M1402 470 L1400 600 L1398 705" stroke="#bfbfbf" stroke-width="38" fill="none"/>
<path d="M1450 470 L1452 600 L1447 715" stroke="#bfbfbf" stroke-width="36" fill="none"/>
<path d="M1366 248 Q1425 222 1484 246 L1474 340 L1462 465 L1384 465 L1378 340 Z" fill="#bfbfbf"/>
<path d="M1378 245 L1386 165 L1404 96" stroke="#bfbfbf" stroke-width="24" fill="none"/>
<path d="M1478 238 L1500 160 L1516 90" stroke="#bfbfbf" stroke-width="24" fill="none"/>
<path d="M1408 78 L1416 98 M1520 76 L1526 98" stroke="#d6d6d6" stroke-width="20" fill="none"/>
<path d="M1374 212 L1382 268 M1490 200 L1470 258" stroke="#dc4a29" stroke-width="26" fill="none"/>
<path d="M1376 282 Q1415 262 1450 290 L1444 372 L1390 372 Z" fill="#dc4a29"/>
<path d="M1410 280 L1412 370" stroke="#d6d6d6" stroke-width="8" fill="none"/>
<ellipse cx="1414" cy="462" rx="33" ry="28" fill="#dc4a29"/><ellipse cx="1415" cy="464" rx="4" ry="24" fill="#d6d6d6"/>
<ellipse cx="1398" cy="610" rx="17" ry="40" fill="#dc4a29"/>
<ellipse cx="1446" cy="618" rx="16" ry="40" fill="#dc4a29"/>
<ellipse cx="1474" cy="520" rx="8" ry="44" fill="#dc4a29"/>
<ellipse cx="1426" cy="226" rx="28" ry="29" fill="#7d7d7d"/><ellipse cx="1432" cy="236" rx="15" ry="15" fill="#a8a8a8"/>
</g></svg>
<svg style="left:990px;top:750px;" width="190" height="190" viewBox="0 0 1080.0 1080.0">
<g stroke-linejoin="round" stroke-linecap="round">
<!-- standing -->
<ellipse cx="366" cy="718" rx="30" ry="17" fill="#fff" stroke="#8c8c8c" stroke-width="3"/>
<path d="M420 412 Q432 460 418 522 L422 640 L418 716 L394 716 L376 600 L348 480 L342 410 Z" fill="#2e1a50"/>
<path d="M395 716 L420 716 L425 745 L400 750 Z" fill="#f1d8c9"/>
<path d="M335 775 Q335 755 370 745 L400 740 Q430 745 432 770 Q425 790 385 792 Q340 792 335 775 Z" fill="#fff" stroke="#8c8c8c" stroke-width="3"/>
<path d="M140 236 Q150 230 345 232 L348 264 Q200 262 185 255 Q150 250 140 236 Z" fill="#f1d8c9" stroke="#8c8c8c" stroke-width="2.500"/>
<path d="M348 232 Q388 218 428 234 L426 330 L414 408 L342 412 L338 330 Z" fill="#c75fdc"/>
<path d="M378 195 H402 V228 H378 Z" fill="#f1d8c9"/>
<ellipse cx="378" cy="172" rx="26" ry="31" fill="#f1d8c9"/>
<path d="M362 135 Q385 108 420 125 Q440 145 432 185 Q440 230 436 285 Q428 250 420 200 Q405 190 402 160 Q385 140 362 135 Z" fill="#b4a486"/>
<!-- squatting -->
<ellipse cx="725" cy="708" rx="35" ry="17" fill="#fff" stroke="#8c8c8c" stroke-width="3"/>
<path d="M690 560 Q760 540 845 540 Q892 580 870 616 Q840 642 780 630 L742 620 L762 700 L736 702 L700 640 Q675 600 690 560 Z" fill="#2e1a50"/>
<path d="M738 700 L762 700 L772 735 L748 742 Z" fill="#f1d8c9"/>
<path d="M685 765 Q688 745 725 735 L760 735 Q788 745 788 765 Q780 780 735 780 Q690 780 685 765 Z" fill="#fff" stroke="#8c8c8c" stroke-width="3"/>
<path d="M445 436 Q455 430 660 433 L662 466 Q500 464 490 456 Q455 450 445 436 Z" fill="#f1d8c9" stroke="#8c8c8c" stroke-width="2.500"/>
<path d="M655 436 L722 410 Q762 430 792 480 L842 545 L762 566 L702 532 L692 468 L660 470 Z" fill="#c75fdc"/>
<path d="M690 400 L715 395 L722 420 L698 428 Z" fill="#f1d8c9"/>
<ellipse cx="682" cy="384" rx="26" ry="31" fill="#f1d8c9"/>
<path d="M662 345 Q690 318 725 335 Q745 355 738 390 Q765 410 778 455 Q755 430 730 410 Q712 400 708 372 Q690 352 662 345 Z" fill="#b4a486"/>
</g></svg>
<span class="t" style='left:10.23px;top:996.00px;font-size:15.5px;color:#444444;transform:scaleX(1.0144);'>Diapositive 3 de 5</span>
<svg style="left:162px;top:995px;" width="22" height="18" viewBox="0 0 22 18"><path d="M9.500 2.500 Q5.500 0.500 0.700 1.200 V14.500 Q5.500 13.800 9.500 16.500 Q11.500 14.500 14 14.500" fill="none" stroke="#6a6a6a" stroke-width="1.100"/>
<path d="M9.500 2.500 V16 M9.500 2.500 Q12.500 0.600 17 1.200 V4" fill="none" stroke="#6a6a6a" stroke-width="1.100"/>
<path d="M13.200 6.800 L19.800 13.400 M19.800 6.800 L13.200 13.400" stroke="#555" stroke-width="2.300"/></svg>
<svg style="left:1135px;top:996px;" width="19" height="17" viewBox="0 0 19 17"><path d="M5.500 4.300 L9 0.500 L12.500 4.300 Z" fill="#6a6a6a"/>
<path d="M1 8 H17.500 M1 11.800 H17.500 M1 15.600 H10" stroke="#6a6a6a" stroke-width="1.200"/></svg>
<span class="t" style='left:1159.48px;top:996.00px;font-size:15.5px;color:#444444;transform:scaleX(1.0129);'>Notes</span>
<svg style="left:1229px;top:994px;" width="22" height="20" viewBox="0 0 22 20"><path d="M2 0.300 H20 Q21.700 0.300 21.700 2 V12.500 Q21.700 14.300 20 14.300 H9.500 L5.500 19 V14.300 H2 Q0.300 14.300 0.300 12.500 V2 Q0.300 0.300 2 0.300 Z" fill="#5c5c5c"/></svg>
<span class="t" style='left:1254.99px;top:996.00px;font-size:15.5px;color:#444444;transform:scaleX(1.0101);'>Commentaires</span>
<div style="left:1384px;top:988px;width:60px;height:32px;background:#c6c6c6;"></div>
<svg style="left:1404px;top:994px;" width="20" height="18" viewBox="0 0 20 18"><rect x="0.600" y="0.600" width="18" height="16.500" fill="none" stroke="#6a6a6a" stroke-width="1.100"/>
<path d="M5.500 0.600 V17 M5.500 12.300 H18.600" stroke="#6a6a6a" stroke-width="1.100"/><rect x="9.700" y="4.300" width="5" height="4" fill="none" stroke="#6a6a6a" stroke-width="1.100"/></svg>
<svg style="left:1464px;top:994px;" width="20" height="18" viewBox="0 0 20 18"><g fill="none" stroke="#6a6a6a" stroke-width="1.100"><rect x="0.600" y="0.600" width="7.300" height="6.600"/><rect x="10.800" y="0.600" width="7.300" height="6.600"/>
<rect x="0.600" y="10.400" width="7.300" height="6.600"/><rect x="10.800" y="10.400" width="7.300" height="6.600"/></g></svg>
<svg style="left:1524px;top:994px;" width="20" height="19" viewBox="0 0 20 19"><g fill="none" stroke="#6a6a6a" stroke-width="1.100"><path d="M9.400 2 Q5.500 0.300 0.600 0.800 V15.500 Q5.500 15 9.400 17 Q13.300 15 18.200 15.500 V0.800 Q13.300 0.300 9.400 2 Z M9.400 2 V17.500"/>
<path d="M2.800 4.500 H7 M2.800 7.300 H7 M2.800 10.100 H7 M2.800 12.900 H7 M11.800 4.500 H16 M11.800 7.300 H16 M11.800 10.100 H16 M11.800 12.900 H16" stroke-width="0.900"/></g></svg>
<svg style="left:1584px;top:994px;" width="20" height="19" viewBox="0 0 20 19"><g fill="none" stroke="#6a6a6a" stroke-width="1.100"><path d="M0 1 H19 M1.800 1 V9.500 H17.200 V1 M9.500 9.500 V17 M5.500 17.300 H13.500"/><path d="M6 5 H13" stroke-width="1.300"/></g></svg>
<div style="left:1632.5px;top:1003px;width:10.5px;height:1.2px;background:#555;"></div>
<div style="left:1651.5px;top:1003px;width:148.5px;height:1.5px;background:#1e1e1e;"></div>
<div style="left:1725.5px;top:999px;width:1.5px;height:9px;background:#1e1e1e;"></div>
<div style="left:1696px;top:995px;width:8px;height:17px;background:#6b6b6b;"></div>
<svg style="left:1808px;top:998px;" width="12" height="12" viewBox="0 0 12 12"><path d="M0 5.700 H11.400 M5.700 0 V11.400" stroke="#555" stroke-width="1.200"/></svg>
<span class="t" style='left:1836.43px;top:996.00px;font-size:15.5px;color:#444444;transform:scaleX(1.0235);'>67 %</span>
<svg style="left:1895px;top:996px;" width="16" height="16" viewBox="0 0 16 16"><rect x="0.600" y="0.600" width="14.300" height="14.300" fill="none" stroke="#6a6a6a" stroke-width="1.100"/>
<path d="M7.700 1.500 V5.500 M7.700 10 V14 M1.500 7.700 H5.500 M10 7.700 H14 M6.300 3 L7.700 1.500 L9.100 3 M6.300 12.500 L7.700 14 L9.100 12.500 M3 6.300 L1.500 7.700 L3 9.100 M12.500 6.300 L14 7.700 L12.500 9.100" fill="none" stroke="#6a6a6a" stroke-width="0.900"/></svg>
<div style="left:1894px;top:235px;width:26px;height:667px;background:#dadada;"></div>
<div style="left:1894px;top:235px;width:25px;height:25px;background:#ffffff;border:1px solid #cfcfcf;"></div>
<div style="left:1894px;top:507px;width:25px;height:123px;background:#ffffff;border:1px solid #ababab;"></div>
<div style="left:1894px;top:877.5px;width:25px;height:24.5px;background:#ffffff;border:1px solid #cfcfcf;"></div>
<svg style="left:1900.5px;top:244px;" width="12" height="6" viewBox="0 0 12 6"><path d="M0 6 L5.700 0 L11.400 6 Z" fill="#777"/></svg>
<svg style="left:1900.5px;top:886.5px;" width="12" height="6" viewBox="0 0 12 6"><path d="M0 0 L5.700 6 L11.400 0 Z" fill="#777"/></svg>
<svg style="left:1900.5px;top:908.5px;" width="12" height="13" viewBox="0 0 12 13"><path d="M1.200 5.300 L5.900 0.200 L10.600 5.300 Z M0 12.600 L5.900 6.500 L11.800 12.600 Z" fill="#777"/></svg>
<svg style="left:1900.5px;top:936px;" width="12" height="13" viewBox="0 0 12 13"><path d="M0 0 L5.900 6.100 L11.800 0 Z M1.200 7.300 L5.900 12.400 L10.600 7.300 Z" fill="#777"/></svg>
<svg style="left:23px;top:1037px;" width="26" height="26" viewBox="0 0 26 26"><path d="M0.500 4 L10.800 2.500 V12.300 H0.500 Z M12.300 2.300 L25 0.500 V12.300 H12.300 Z M0.500 13.800 H10.800 V23.600 L0.500 22.100 Z M12.300 13.800 H25 V25.600 L12.300 23.800 Z" fill="#fff"/></svg>
<div style="left:72px;top:1020px;width:516px;height:60px;background:#f2f2f2;border:2px solid #c3c3c3;border-right-width:1px;"></div>
<svg style="left:89px;top:1037px;" width="27" height="27" viewBox="0 0 27 27"><circle cx="16.800" cy="9" r="7.700" fill="none" stroke="#111" stroke-width="1.700"/><path d="M11.300 14.500 L1.200 24.500" stroke="#111" stroke-width="1.900"/></svg>
<span class="t" style='left:132.48px;top:1040.00px;font-size:22px;color:#2b2b2b;transform:scaleX(1.0329);'>Tapez ici pour effectuer une recherche</span>
<div style="left:893px;top:1020px;width:73px;height:60px;background:#4c4c4c;"></div>
<div style="left:599px;top:1077px;width:61px;height:3px;background:#e5f7b4;"></div>
<div style="left:749px;top:1077px;width:61px;height:3px;background:#e5f7b4;"></div>
<div style="left:893px;top:1077px;width:73px;height:3px;background:#e5f7b4;"></div>
<div style="left:1049px;top:1077px;width:61px;height:3px;background:#e5f7b4;"></div>
<svg style="left:612px;top:1036px;" width="34" height="28" viewBox="0 0 34 28"><path d="M1 3 Q1 1 3 1 H12.500 L15 3.500 H31 Q33 3.500 33 5.500 V24 Q33 26 31 26 H3 Q1 26 1 24 Z" fill="#e9aa1a"/>
<path d="M1 6.500 H31 Q33 6.500 33 8.500 V24 Q33 26 31 26 H3 Q1 26 1 24 Z" fill="#fbcb52"/>
<path d="M6.500 27.300 V18 Q6.500 15.500 9 15.500 H25 Q27.500 15.500 27.500 18 V27.300 H22.500 V20.500 H11.500 V27.300 Z" fill="#3f9ae0"/></svg>
<svg style="left:686px;top:1032px;" width="36" height="36" viewBox="0 0 36 36"><rect x="1" y="0.700" width="34" height="34.500" fill="#fff"/><path d="M35 1 V35.300 H1" fill="none" stroke="#000" stroke-width="1.400"/>
<path d="M4 31.500 Q18 27 34.500 18.500 V25 Q18 30 4 31.500 Z" fill="#a010d0"/>
<path d="M3.500 30.800 L6 25 L27.500 1 H34 V8 L9 29 Z" fill="#9a9a9a"/>
<path d="M8 25.500 L29 2.500 L33 4 L10 27.500 Z" fill="#d8d8d8"/>
<path d="M3.500 30.800 L5.500 26 L8.500 29 Z" fill="#2a2a2a"/></svg>
<svg style="left:761px;top:1033px;" width="36" height="34" viewBox="0 0 36 34"><path d="M10 0.800 H33 Q35 0.800 35 2.800 V9 H8 V2.800 Q8 0.800 10 0.800 Z" fill="#41a5ee"/>
<rect x="8" y="9" width="27" height="8" fill="#2b7cd3"/><rect x="8" y="17" width="27" height="8" fill="#185abd"/>
<path d="M8 25 H35 V30.500 Q35 32.500 33 32.500 H10 Q8 32.500 8 30.500 Z" fill="#103f91"/>
<rect x="0" y="8" width="17.800" height="17.800" rx="1.800" fill="#1d5fc0"/>
<text x="8.900" y="21.600" font-size="13" font-weight="700" fill="#fff" text-anchor="middle" font-family="Liberation Sans, sans-serif">W</text></svg>
<svg style="left:836px;top:1032px;" width="36" height="36" viewBox="0 0 36 36"><circle cx="18" cy="17.600" r="17.200" fill="#2b8fd6"/>
<path d="M11.500 10 Q16 9.300 20.500 12.500 Q24.500 9.300 30.500 10.300 Q24.500 11 21 15 Q17.500 11 11.500 10 Z" fill="#fff"/>
<path d="M1.500 21.300 Q10 19.800 16 26.500 Q21 19.300 30.500 19.800 Q22 21.500 17 30 Q10.500 22 1.500 21.300 Z" fill="#fff"/></svg>
<svg style="left:910px;top:1033px;" width="38" height="34" viewBox="0 0 38 34"><circle cx="21.300" cy="17" r="15.500" fill="#d6532f"/>
<path d="M21.300 1.500 A15.500 15.500 0 0 1 36.800 17 H21.300 Z" fill="#ff8f6b"/>
<path d="M21.300 17 H36.800 A15.500 15.500 0 0 1 21.300 32.500 Z" fill="#ed6c47"/>
<rect x="1" y="8" width="17.800" height="18" rx="1.800" fill="#c8401e"/>
<text x="9.900" y="21.800" font-size="13.500" font-weight="700" fill="#fff" text-anchor="middle" font-family="Liberation Sans, sans-serif">P</text></svg>
<svg style="left:985px;top:1031px;" width="38" height="38" viewBox="0 0 38 38"><circle cx="19" cy="18.700" r="17.500" fill="#1f49b0"/>
<path d="M12 3 Q24 -1 32 8 Q38 17 34 27 Q30 34 22 36 Q32 28 30 18 Q28 8 12 3 Z" fill="#3b8cf0"/>
<path d="M4 14 Q8 9 11 11 L24 13.500 L26 30 Q16 30 6 25.500 Q2 20 4 14 Z" fill="#eef1f8"/>
<path d="M8 14.500 L16 21.500 L24.500 15" fill="none" stroke="#b9c0d0" stroke-width="1"/>
<path d="M2 24 Q8 34 20 36 Q10 31 6 25 Z" fill="#13247a"/></svg>
<svg style="left:1061px;top:1031px;" width="36" height="38" viewBox="0 0 36 38"><defs><linearGradient id="ffg" x1="0.200" y1="0" x2="0.700" y2="1"><stop offset="0" stop-color="#ffd53a"/><stop offset="0.450" stop-color="#ff8a16"/><stop offset="1" stop-color="#f5156c"/></linearGradient></defs>
<path d="M22 1 Q30 6 33.500 14 Q36.500 24 31 31 Q25 37 17 36.500 Q7 36 2.500 27 Q-0.500 19 4 11.500 Q5 9 8 7.500 Q8 10 9.500 11.500 Q12 6 17.500 7 Q21 4.500 22 1 Z" fill="url(#ffg)"/>
<circle cx="17.800" cy="20.500" r="7.300" fill="#7a3fe0"/>
<path d="M8 15 Q13 12.500 17 15.500 Q21 17 24 14.500 Q23 21 17 20.500 Q11 21 8 15 Z" fill="#ff9a1a"/></svg>
<svg style="left:1138px;top:1032px;" width="32" height="36" viewBox="0 0 32 36"><path d="M2 28 H30 L31.500 34.500 H0.500 Z" fill="#f28a0a"/>
<path d="M14 1.500 Q16 0 18 1.500 L27 28 Q16 32 5 28 Z" fill="#f08a0c"/>
<path d="M11.800 8 Q16 9.500 20.200 8 L22.200 14 Q16 16 9.800 14 Z" fill="#f3f1ee"/>
<path d="M8.200 19.500 Q16 22 23.800 19.500 L25.600 25 Q16 28 6.400 25 Z" fill="#f3f1ee"/></svg>
<svg style="left:1211px;top:1032px;" width="36" height="36" viewBox="0 0 36 36"><defs><linearGradient id="phg" x1="0" y1="0" x2="0" y2="1"><stop offset="0" stop-color="#6fd0fa"/><stop offset="1" stop-color="#1769dc"/></linearGradient></defs>
<circle cx="18" cy="17.700" r="17.200" fill="url(#phg)"/>
<path d="M10.500 7.500 Q13 6 14 8.500 L15.500 12.500 Q15.800 14 14.500 15 Q14.500 19 18 22.500 Q20 24.500 21.500 23 Q23 22.300 24 23.500 L26.500 26.500 Q27.500 28.300 25.500 29.500 Q21 31 15.500 26 Q9 19 9 11.500 Q9 8.500 10.500 7.500 Z" fill="#f4f4f6"/></svg>
<svg style="left:1285px;top:1031px;" width="38" height="38" viewBox="0 0 38 38"><circle cx="19" cy="18.700" r="17.600" fill="#0f8a4e" stroke="#7fcfa0" stroke-width="1"/>
<path d="M19 1.100 A17.600 17.600 0 0 1 33 30 Z" fill="#18a05c" opacity="0.600"/></svg>
<span class="t" style='left:1289.88px;top:1041.00px;font-size:14px;color:#c2ead0;font-weight:700;transform:scaleX(0.9158);'>NOT</span>
<svg style="left:1639px;top:1035px;" width="30" height="30" viewBox="0 0 30 30"><defs><linearGradient id="yg" x1="0.150" y1="0.150" x2="0.850" y2="0.850"><stop offset="0" stop-color="#ffe873"/><stop offset="1" stop-color="#ff9c0a"/></linearGradient></defs>
<circle cx="14.900" cy="14.700" r="14.100" fill="url(#yg)"/></svg>
<svg style="left:1699px;top:1044px;" width="19" height="11" viewBox="0 0 19 11"><path d="M0.500 9.700 L9.200 1 L17.900 9.700" fill="none" stroke="#fff" stroke-width="1.300"/></svg>
<span class="t" style='left:1760.62px;top:1028.00px;font-size:17px;color:#ffffff;transform:scaleX(1.0390);'>08:43</span>
<span class="t" style='left:1736.14px;top:1056.00px;font-size:17px;color:#ffffff;transform:scaleX(1.0904);'>15/10/2021</span>
<svg style="left:1858px;top:1038px;" width="38" height="38" viewBox="0 0 38 38"><path d="M0 0 H24 V20 H11 V24.500 L6.500 20 H0 Z" fill="#fff"/>
<path d="M5 5.500 H19 M5 9.500 H19 M5 13.500 H14" stroke="#1b1b1b" stroke-width="1.200"/>
<circle cx="23.700" cy="23.400" r="11.200" fill="#3b3b3b" stroke="#8c8c8c" stroke-width="1"/>
<path d="M12.500 23.400 A11.200 11.200 0 0 1 23.700 12.200 V23.400 Z" fill="#9a9a9a" opacity="0.600"/></svg>
<span class="t" style='left:1877.84px;top:1053.00px;font-size:15.5px;color:#ffffff;font-weight:700;transform:scaleX(0.7586);'>1</span>
<div style="left:1912.5px;top:1020px;width:1.5px;height:60px;background:#8a8a8a;"></div>
</div></body></html>
